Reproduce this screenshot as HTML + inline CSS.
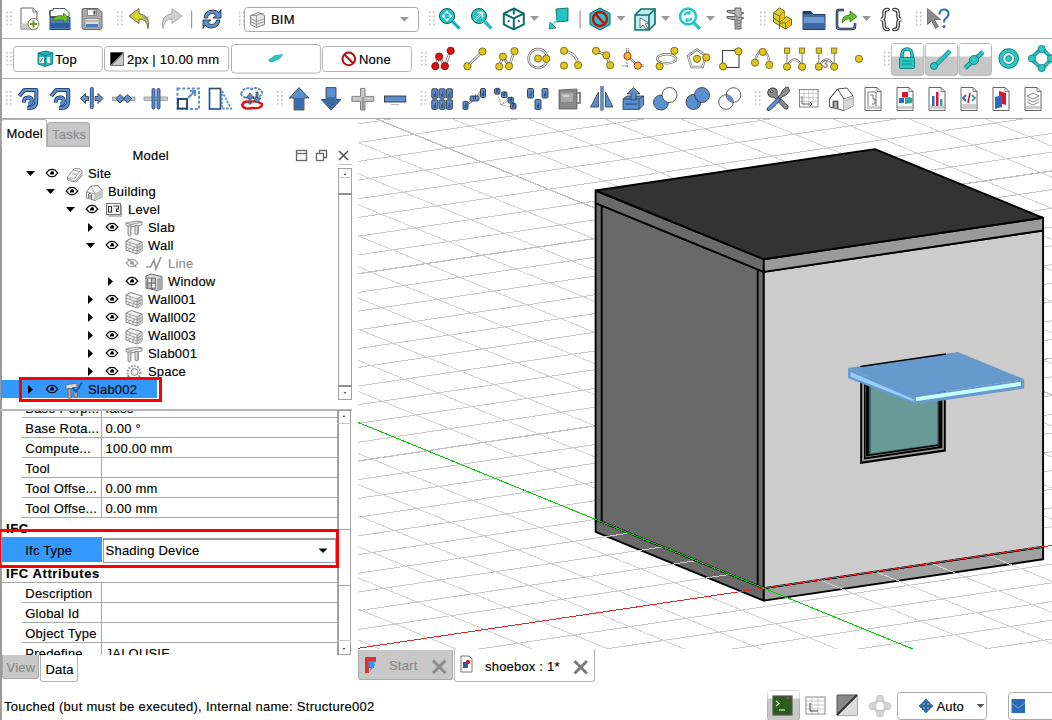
<!DOCTYPE html><html><head><meta charset="utf-8"><style>
*{margin:0;padding:0;box-sizing:border-box}
html,body{width:1052px;height:720px;overflow:hidden;background:#fff}
body{position:relative;font-family:"Liberation Sans",sans-serif;font-size:13.3px;color:#000}
.a{position:absolute}
.t{position:absolute;white-space:nowrap;line-height:16px;-webkit-text-stroke:0.15px currentColor}
.hl{position:absolute;height:1px;background:#b4b4b4}
.vl{position:absolute;width:1px;background:#b4b4b4}
.grip{position:absolute;width:6px;height:16px;background-image:radial-gradient(circle,#c8c8c8 0.8px,transparent 1px);background-size:3px 3px}
.btn{position:absolute;border:1px solid #b8b8b8;border-radius:4px;background:#fff}
</style></head><body>
<div class="hl" style="left:0;top:38px;width:1052px;background:#a8a8a8"></div>
<div class="hl" style="left:0;top:78px;width:1052px;background:#a8a8a8"></div>
<div class="hl" style="left:0;top:118px;width:1052px;background:#a8a8a8"></div>
<div class="vl" style="left:0;top:0;height:720px;width:1.5px;background:#9a9a9a"></div>
<svg class="a" style="left:0;top:0" width="1052" height="118" viewBox="0 0 1052 118"><path d="M6.2,12.2 h2 M6.7,11.7 v2" stroke="#c4c4c4" stroke-width="0.9" fill="none"/><path d="M10.2,12.2 h2 M10.7,11.7 v2" stroke="#c4c4c4" stroke-width="0.9" fill="none"/><path d="M6.2,16.2 h2 M6.7,15.7 v2" stroke="#c4c4c4" stroke-width="0.9" fill="none"/><path d="M10.2,16.2 h2 M10.7,15.7 v2" stroke="#c4c4c4" stroke-width="0.9" fill="none"/><path d="M6.2,20.2 h2 M6.7,19.7 v2" stroke="#c4c4c4" stroke-width="0.9" fill="none"/><path d="M10.2,20.2 h2 M10.7,19.7 v2" stroke="#c4c4c4" stroke-width="0.9" fill="none"/><path d="M6.2,24.2 h2 M6.7,23.7 v2" stroke="#c4c4c4" stroke-width="0.9" fill="none"/><path d="M10.2,24.2 h2 M10.7,23.7 v2" stroke="#c4c4c4" stroke-width="0.9" fill="none"/><g transform="translate(19.5,7.5) scale(1.0)"><path d="M1.5,0.5 h12 l4,4 v17 h-16z" fill="#fff" stroke="#666" stroke-width="1"/><path d="M13.5,0.5 v4 h4" fill="#ddd" stroke="#666" stroke-width="0.8"/><rect x="2" y="16" width="8" height="5" fill="#ccc"/><circle cx="14" cy="16.5" r="5.5" fill="#fff" stroke="#777" stroke-width="1"/><path d="M14,13 v7 M10.5,16.5 h7" stroke="#6a9a1a" stroke-width="2"/></g><g transform="translate(49.5,8.0) scale(1.0)"><path d="M0.5,2.5 h3 v-2 h12 l4,4 v4 h-19z" fill="#fff" stroke="#555" stroke-width="1"/><path d="M0.5,2 v19.5 h20 v-12 h-20" fill="#4a80c0" stroke="#2a4a80" stroke-width="1"/><rect x="1.5" y="15" width="18" height="5" fill="#2d5f9e"/><path d="M3,13 Q6,6 14,8 L14,5 L19,10 L14,15 L14,12 Q8,11 3,13z" fill="#6ac02a" stroke="#3a7a10" stroke-width="0.8"/></g><g transform="translate(81.5,8.0) scale(1.0)"><path d="M0.5,2.5 q0,-2 2,-2 h14 l4,4 v15 q0,2 -2,2 h-16 q-2,0 -2,-2z" fill="#a8a8a8" stroke="#666" stroke-width="1"/><rect x="6" y="1.5" width="9" height="6" fill="#fff" stroke="#777" stroke-width="0.8"/><rect x="12" y="2.5" width="2" height="4" fill="#444"/><rect x="3.5" y="10.5" width="14" height="9" fill="#ddd" stroke="#888" stroke-width="0.8"/><rect x="4.5" y="16" width="12" height="3" fill="#4a80c0"/><path d="M4.5,13 h12" stroke="#999" stroke-width="1"/></g><path d="M117.0,12.2 h2 M117.5,11.7 v2" stroke="#c4c4c4" stroke-width="0.9" fill="none"/><path d="M121.0,12.2 h2 M121.5,11.7 v2" stroke="#c4c4c4" stroke-width="0.9" fill="none"/><path d="M117.0,16.2 h2 M117.5,15.7 v2" stroke="#c4c4c4" stroke-width="0.9" fill="none"/><path d="M121.0,16.2 h2 M121.5,15.7 v2" stroke="#c4c4c4" stroke-width="0.9" fill="none"/><path d="M117.0,20.2 h2 M117.5,19.7 v2" stroke="#c4c4c4" stroke-width="0.9" fill="none"/><path d="M121.0,20.2 h2 M121.5,19.7 v2" stroke="#c4c4c4" stroke-width="0.9" fill="none"/><path d="M117.0,24.2 h2 M117.5,23.7 v2" stroke="#c4c4c4" stroke-width="0.9" fill="none"/><path d="M121.0,24.2 h2 M121.5,23.7 v2" stroke="#c4c4c4" stroke-width="0.9" fill="none"/><g transform="translate(128.0,7.5) scale(1.0)"><path d="M11,1 L1,8.5 L11,16 L11,11.5 Q19,11 20,21 Q23,8 11,6z" fill="#d4d42a" stroke="#666" stroke-width="1"/><path d="M14,9 l7,0 -3,4z" fill="#999"/></g><g transform="translate(160.0,7.5) scale(1.0)"><path d="M12,1 L22,8.5 L12,16 L12,11.5 Q4,11 3,21 Q0,8 12,6z" fill="#cfcfcf" stroke="#aaa" stroke-width="1"/></g><rect x="191" y="10.5" width="1.2" height="18" fill="#999"/><g transform="translate(201.0,8.0) scale(1.0)"><path d="M3,10 Q4,2 12,2 Q16,2 18,5 L20,1.5 L20,10 L12,10 L15,7.5 Q14,5.5 11.5,5.5 Q7,5.5 6.5,10z" fill="#5a90d0" stroke="#234" stroke-width="0.9"/><path d="M19,12 Q18,20 10,20 Q6,20 4,17 L2,20.5 L2,12 L10,12 L7,14.5 Q8,16.5 10.5,16.5 Q15,16.5 15.5,12z" fill="#5a90d0" stroke="#234" stroke-width="0.9"/></g><path d="M239.0,12.2 h2 M239.5,11.7 v2" stroke="#c4c4c4" stroke-width="0.9" fill="none"/><path d="M243.0,12.2 h2 M243.5,11.7 v2" stroke="#c4c4c4" stroke-width="0.9" fill="none"/><path d="M239.0,16.2 h2 M239.5,15.7 v2" stroke="#c4c4c4" stroke-width="0.9" fill="none"/><path d="M243.0,16.2 h2 M243.5,15.7 v2" stroke="#c4c4c4" stroke-width="0.9" fill="none"/><path d="M239.0,20.2 h2 M239.5,19.7 v2" stroke="#c4c4c4" stroke-width="0.9" fill="none"/><path d="M243.0,20.2 h2 M243.5,19.7 v2" stroke="#c4c4c4" stroke-width="0.9" fill="none"/><path d="M239.0,24.2 h2 M239.5,23.7 v2" stroke="#c4c4c4" stroke-width="0.9" fill="none"/><path d="M243.0,24.2 h2 M243.5,23.7 v2" stroke="#c4c4c4" stroke-width="0.9" fill="none"/><rect x="244.5" y="7.5" width="174" height="24" rx="3" fill="#fff" stroke="#aaa"/><g transform="translate(249.5,11.5) scale(1.0)"><path d="M1,4 L9,1 L15,4 L15,13 L7,16 L1,13z" fill="#e8e8e8" stroke="#777" stroke-width="0.9"/><path d="M1,7 L7,10 L15,7 M1,10 L7,13 L15,10 M7,4 L7,16 M7,4 L15,1.5 M1,4 L7,4" fill="none" stroke="#888" stroke-width="0.8"/></g><polygon points="400,17 409,17 404.5,21.5" fill="#999"/><path d="M429.0,12.2 h2 M429.5,11.7 v2" stroke="#c4c4c4" stroke-width="0.9" fill="none"/><path d="M433.0,12.2 h2 M433.5,11.7 v2" stroke="#c4c4c4" stroke-width="0.9" fill="none"/><path d="M429.0,16.2 h2 M429.5,15.7 v2" stroke="#c4c4c4" stroke-width="0.9" fill="none"/><path d="M433.0,16.2 h2 M433.5,15.7 v2" stroke="#c4c4c4" stroke-width="0.9" fill="none"/><path d="M429.0,20.2 h2 M429.5,19.7 v2" stroke="#c4c4c4" stroke-width="0.9" fill="none"/><path d="M433.0,20.2 h2 M433.5,19.7 v2" stroke="#c4c4c4" stroke-width="0.9" fill="none"/><path d="M429.0,24.2 h2 M429.5,23.7 v2" stroke="#c4c4c4" stroke-width="0.9" fill="none"/><path d="M433.0,24.2 h2 M433.5,23.7 v2" stroke="#c4c4c4" stroke-width="0.9" fill="none"/><g transform="translate(438.5,7.5) scale(1.0)"><circle cx="8.5" cy="8.5" r="7.5" fill="#24c4c4" stroke="#0a5a5a" stroke-width="1"/><path d="M13.5,13.5 L21,21" stroke="#24c4c4" stroke-width="3.5"/><path d="M13.5,13.5 L21,21" stroke="#0a5a5a" stroke-width="0.6"/><path d="M8.5,3 l2.5,3 h-5z M8.5,14 l2.5,-3 h-5z M3,8.5 l3,2.5 v-5z M14,8.5 l-3,2.5 v-5z" fill="#fff"/><circle cx="8.5" cy="8.5" r="2" fill="#24c4c4"/></g><g transform="translate(470.5,7.5) scale(1.0)"><circle cx="8.5" cy="8.5" r="7.5" fill="#24c4c4" stroke="#0a5a5a" stroke-width="1"/><path d="M13.5,13.5 L21,21" stroke="#24c4c4" stroke-width="3.5"/><path d="M4,13 L11,6 M7,5 h5 v5" stroke="#fff" stroke-width="1.6" fill="none"/><path d="M4,13 L11,6" stroke="#0a5a5a" stroke-width="0.5"/></g><g transform="translate(502.8,7.5) scale(1.0)"><path d="M11,1 L21,6 L21,17 L11,22 L1,17 L1,6z" fill="#fff" stroke="#0e6e6e" stroke-width="2"/><path d="M1,6 L11,11 L21,6 M11,11 V22" stroke="#0e6e6e" stroke-width="2" fill="none"/><path d="M11,2 v5" stroke="#0e6e6e" stroke-width="2"/><path d="M5,14 l2,-1 M15,13 l2,1" stroke="#0e6e6e" stroke-width="1.5"/></g><polygon points="530.0,16.0 539.0,16.0 534.5,21.0" fill="#999"/><g transform="translate(548.0,8.0) scale(1.0)"><path d="M8,1 L20,0 L20,13 L9,14z" fill="#24c4c4" stroke="#0a5a5a" stroke-width="0.8"/><path d="M14,7 L3,18" stroke="#24c4c4" stroke-width="1.5" stroke-dasharray="2,1"/><path d="M1,21 L2,14 L8,20z" fill="#24c4c4" stroke="#0a5a5a" stroke-width="0.6"/></g><rect x="579.5" y="10.5" width="1.2" height="18" fill="#999"/><g transform="translate(589.0,7.5) scale(1.0)"><path d="M11,0.5 L21,6 L21,17 L11,22.5 L1,17 L1,6z" fill="#24c4c4" stroke="#0a5a5a" stroke-width="1"/><circle cx="11" cy="11.5" r="7" fill="none" stroke="#c01010" stroke-width="2.4"/><path d="M6.5,6.5 L15.5,16.5" stroke="#c01010" stroke-width="2.4"/></g><polygon points="616.5,16.0 625.5,16.0 621.0,21.0" fill="#999"/><g transform="translate(634.0,8.0) scale(1.0)"><path d="M7,1 L21,1 L21,16 L15,22 L1,22 L1,7z" fill="#bfeeee" stroke="#0e6e6e" stroke-width="1.6"/><path d="M1,7 L15,7 L21,1 M15,7 V22" stroke="#0e6e6e" stroke-width="1.6" fill="none"/><path d="M6,10 L6,20 L9,17 L12,21 L14,20 L11,16 L15,15z" fill="#fff" stroke="#555" stroke-width="0.8"/></g><polygon points="661.0,16.0 670.0,16.0 665.5,21.0" fill="#999"/><g transform="translate(678.5,7.5) scale(1.0)"><circle cx="9.5" cy="9" r="8" fill="#e8f8f8" stroke="#24c4c4" stroke-width="2.4"/><path d="M15,15 L21.5,21.5" stroke="#24c4c4" stroke-width="3.5"/><path d="M5,8 Q6,4 10,4 L12,3 L12,7 L8,7 L10,6 Q7,6 7,8z M14,10 Q13,14 9,14 L7,15 L7,11 L11,11 L9,12 Q12,12 12,10z" fill="#24c4c4"/></g><polygon points="706.0,16.0 715.0,16.0 710.5,21.0" fill="#999"/><g transform="translate(726.0,7.5) scale(1.0)"><path d="M9,0.5 L15,0.5 L15,5 L18,5.5 L15,7 L15,10 L18,10.5 L15,12 L15,21.5 L9,21.5 L9,12 L6,12 L1,10.5 L1,9 L9,9 L9,6 L6,6 L1,4.5 L1,3 L9,3z" fill="#b4b4b4" stroke="#555" stroke-width="0.9"/><path d="M11,8 v12 M12,10 h2 M12,13 h2 M12,16 h2 M12,19 h2" stroke="#666" stroke-width="0.8"/></g><path d="M760.0,12.2 h2 M760.5,11.7 v2" stroke="#c4c4c4" stroke-width="0.9" fill="none"/><path d="M764.0,12.2 h2 M764.5,11.7 v2" stroke="#c4c4c4" stroke-width="0.9" fill="none"/><path d="M760.0,16.2 h2 M760.5,15.7 v2" stroke="#c4c4c4" stroke-width="0.9" fill="none"/><path d="M764.0,16.2 h2 M764.5,15.7 v2" stroke="#c4c4c4" stroke-width="0.9" fill="none"/><path d="M760.0,20.2 h2 M760.5,19.7 v2" stroke="#c4c4c4" stroke-width="0.9" fill="none"/><path d="M764.0,20.2 h2 M764.5,19.7 v2" stroke="#c4c4c4" stroke-width="0.9" fill="none"/><path d="M760.0,24.2 h2 M760.5,23.7 v2" stroke="#c4c4c4" stroke-width="0.9" fill="none"/><path d="M764.0,24.2 h2 M764.5,23.7 v2" stroke="#c4c4c4" stroke-width="0.9" fill="none"/><g transform="translate(772.5,7.0) scale(1.0)"><path d="M1,6 L7,1 L12,4 L12,11 L14,9.5 L19,12.5 L19,18 L13,22 L1,15z" fill="#d8d030" stroke="#5e5a10" stroke-width="0.9"/><path d="M7,9 L12,4 M1,6 L7,9 L7,22 M7,15 L13,11 M13,16 L19,12.5 M13,16 L13,22 M1,11 L7,15 M7,16 L13,16" fill="none" stroke="#5e5a10" stroke-width="0.8"/><path d="M7.5,9 L12,4.5 L12,11 L7.5,14z" fill="#f0c010"/><path d="M13.5,16 L18.5,13 L18.5,18 L13.5,21z" fill="#f0c010"/></g><g transform="translate(802.5,8.0) scale(1.0)"><path d="M0.5,3.5 h8 l2,3 h12 v15 h-22z" fill="#6a9ad0" stroke="#1e3e6e" stroke-width="1"/><path d="M0.5,3.5 h8 l2,3 h-10z" fill="#1e3e6e"/><rect x="1" y="15" width="21" height="6" fill="#3a6aa0"/><path d="M0.5,8 h22" stroke="#1e3e6e" stroke-width="1"/></g><g transform="translate(836.0,8.0) scale(1.0)"><path d="M8,2 L3,2 Q1,2 1,4 L1,18 Q1,21 4,21 L16,21 Q19,21 19,18 L19,15" fill="none" stroke="#2a2a2a" stroke-width="2.6"/><path d="M8,2 L3,2 Q1,2 1,4 L1,18 Q1,21 4,21 L16,21 Q19,21 19,18 L19,15" fill="none" stroke="#4a80c0" stroke-width="1.2"/><path d="M6,15 Q6,7 14,7 L14,3 L21,8.5 L14,14 L14,10.5 Q9,10.5 6,15z" fill="#6ac02a" stroke="#2a6a10" stroke-width="0.8"/></g><polygon points="862.0,16.0 871.0,16.0 866.5,21.0" fill="#999"/><g transform="translate(880.0,8.0) scale(1.0)"><path d="M8,1.5 Q4,1.5 4,5 L4,8.5 Q4,11 1,11.5 Q4,12 4,14.5 L4,18 Q4,21.5 8,21.5 M14,1.5 Q18,1.5 18,5 L18,8.5 Q18,11 21,11.5 Q18,12 18,14.5 L18,18 Q18,21.5 14,21.5" fill="none" stroke="#2a2a2a" stroke-width="3.6" stroke-linecap="round"/><path d="M8,1.5 Q4,1.5 4,5 L4,8.5 Q4,11 1,11.5 Q4,12 4,14.5 L4,18 Q4,21.5 8,21.5 M14,1.5 Q18,1.5 18,5 L18,8.5 Q18,11 21,11.5 Q18,12 18,14.5 L18,18 Q18,21.5 14,21.5" fill="none" stroke="#fff" stroke-width="1.3" stroke-linecap="round"/></g><path d="M916.0,12.2 h2 M916.5,11.7 v2" stroke="#c4c4c4" stroke-width="0.9" fill="none"/><path d="M920.0,12.2 h2 M920.5,11.7 v2" stroke="#c4c4c4" stroke-width="0.9" fill="none"/><path d="M916.0,16.2 h2 M916.5,15.7 v2" stroke="#c4c4c4" stroke-width="0.9" fill="none"/><path d="M920.0,16.2 h2 M920.5,15.7 v2" stroke="#c4c4c4" stroke-width="0.9" fill="none"/><path d="M916.0,20.2 h2 M916.5,19.7 v2" stroke="#c4c4c4" stroke-width="0.9" fill="none"/><path d="M920.0,20.2 h2 M920.5,19.7 v2" stroke="#c4c4c4" stroke-width="0.9" fill="none"/><path d="M916.0,24.2 h2 M916.5,23.7 v2" stroke="#c4c4c4" stroke-width="0.9" fill="none"/><path d="M920.0,24.2 h2 M920.5,23.7 v2" stroke="#c4c4c4" stroke-width="0.9" fill="none"/><g transform="translate(926.5,7.5) scale(1.0)"><path d="M1,1 L1,17 L5,13 L9,21 L12,19 L8,12 L14,12z" fill="#8a8a8a" stroke="#555" stroke-width="0.7"/><path d="M13,7 Q13,2 17.5,2 Q22,2 22,6.5 Q22,9 19,11 Q17.5,12 17.5,15" fill="none" stroke="#2a6ab8" stroke-width="2"/><circle cx="17.5" cy="19" r="1.5" fill="#2a6ab8"/></g><path d="M6.3,52.4 h2 M6.8,51.9 v2" stroke="#c4c4c4" stroke-width="0.9" fill="none"/><path d="M10.3,52.4 h2 M10.8,51.9 v2" stroke="#c4c4c4" stroke-width="0.9" fill="none"/><path d="M6.3,56.4 h2 M6.8,55.9 v2" stroke="#c4c4c4" stroke-width="0.9" fill="none"/><path d="M10.3,56.4 h2 M10.8,55.9 v2" stroke="#c4c4c4" stroke-width="0.9" fill="none"/><path d="M6.3,60.4 h2 M6.8,59.9 v2" stroke="#c4c4c4" stroke-width="0.9" fill="none"/><path d="M10.3,60.4 h2 M10.8,59.9 v2" stroke="#c4c4c4" stroke-width="0.9" fill="none"/><path d="M6.3,64.4 h2 M6.8,63.9 v2" stroke="#c4c4c4" stroke-width="0.9" fill="none"/><path d="M10.3,64.4 h2 M10.8,63.9 v2" stroke="#c4c4c4" stroke-width="0.9" fill="none"/><rect x="13.5" y="46.5" width="88.8" height="25" rx="3" fill="#fff" stroke="#b0b0b0"/><rect x="104.5" y="46.5" width="124.2" height="24.5" rx="3" fill="#fff" stroke="#b0b0b0"/><rect x="231.5" y="44.5" width="88.9" height="28.6" rx="3" fill="#fff" stroke="#b0b0b0"/><rect x="322.5" y="46.5" width="88.9" height="25" rx="3" fill="#fff" stroke="#b0b0b0"/><path d="M38,53 L46,51 L53,53 L52.5,64 L45,66.5 L38,64z" fill="#20b8b8" stroke="#0a6a6a" stroke-width="0.8"/><path d="M38,53 L45,55.5 L53,53 M45,55.5 V66.5" stroke="#0a6a6a" stroke-width="0.8" fill="none"/><rect x="39.5" y="57" width="4.5" height="6" fill="#fff"/><path d="M40,62 l3,-4" stroke="#333" stroke-width="0.8"/><rect x="47" y="57" width="3" height="6" fill="#fff"/><path d="M110.5,52.5 h13 v13 h-13z" fill="#fff" stroke="#888" stroke-width="0.8"/><path d="M110.5,52.5 h13 l-13,13z" fill="#000"/><path d="M123.5,53.5 v12 h-12z" fill="#c8c8c8" stroke="#666" stroke-width="0.8"/><path d="M268,60 L275,55 L283.5,54 L280,59 L272,62.5z" fill="#30c0c0"/><path d="M268,60 L272,62.5 L270,62z" fill="#0a7a7a"/><circle cx="348.8" cy="58.9" r="6.3" fill="none" stroke="#b01010" stroke-width="2"/><path d="M344.5,54.5 L353,63.3" stroke="#b01010" stroke-width="2"/><path d="M421.0,52.4 h2 M421.5,51.9 v2" stroke="#c4c4c4" stroke-width="0.9" fill="none"/><path d="M425.0,52.4 h2 M425.5,51.9 v2" stroke="#c4c4c4" stroke-width="0.9" fill="none"/><path d="M421.0,56.4 h2 M421.5,55.9 v2" stroke="#c4c4c4" stroke-width="0.9" fill="none"/><path d="M425.0,56.4 h2 M425.5,55.9 v2" stroke="#c4c4c4" stroke-width="0.9" fill="none"/><path d="M421.0,60.4 h2 M421.5,59.9 v2" stroke="#c4c4c4" stroke-width="0.9" fill="none"/><path d="M425.0,60.4 h2 M425.5,59.9 v2" stroke="#c4c4c4" stroke-width="0.9" fill="none"/><path d="M421.0,64.4 h2 M421.5,63.9 v2" stroke="#c4c4c4" stroke-width="0.9" fill="none"/><path d="M425.0,64.4 h2 M425.5,63.9 v2" stroke="#c4c4c4" stroke-width="0.9" fill="none"/><path d="M435.3,66.2 L439.1,56.6 L444.9,66.2 L450.7,50.8" fill="none" stroke="#666" stroke-width="2.6"/><path d="M435.3,66.2 L439.1,56.6 L444.9,66.2 L450.7,50.8" fill="none" stroke="#fff" stroke-width="1.2"/><circle cx="435.3" cy="66.2" r="3.6" fill="#e01010" stroke="#801010" stroke-width="0.9"/><circle cx="439.1" cy="56.6" r="3.6" fill="#e01010" stroke="#801010" stroke-width="0.9"/><circle cx="444.9" cy="66.2" r="3.6" fill="#e01010" stroke="#801010" stroke-width="0.9"/><circle cx="450.7" cy="50.8" r="3.6" fill="#e01010" stroke="#801010" stroke-width="0.9"/><path d="M467.4,66.2 L482.5,51.5" fill="none" stroke="#666" stroke-width="2.6"/><path d="M467.4,66.2 L482.5,51.5" fill="none" stroke="#fff" stroke-width="1.2"/><circle cx="467.4" cy="66.2" r="3.6" fill="#e6c41e" stroke="#6e6a1a" stroke-width="0.9"/><circle cx="482.5" cy="51.5" r="3.6" fill="#e6c41e" stroke="#6e6a1a" stroke-width="0.9"/><path d="M499.2,66.5 L503.0,56.6 L509.0,66.2 L514.5,51.1" fill="none" stroke="#666" stroke-width="2.6"/><path d="M499.2,66.5 L503.0,56.6 L509.0,66.2 L514.5,51.1" fill="none" stroke="#fff" stroke-width="1.2"/><circle cx="499.2" cy="66.5" r="3.6" fill="#e6c41e" stroke="#6e6a1a" stroke-width="0.9"/><circle cx="503.0" cy="56.6" r="3.6" fill="#e6c41e" stroke="#6e6a1a" stroke-width="0.9"/><circle cx="509.0" cy="66.2" r="3.6" fill="#e6c41e" stroke="#6e6a1a" stroke-width="0.9"/><circle cx="514.5" cy="51.1" r="3.6" fill="#e6c41e" stroke="#6e6a1a" stroke-width="0.9"/><circle cx="538" cy="58.5" r="9.5" fill="none" stroke="#777" stroke-width="2.4"/><circle cx="538" cy="58.5" r="9.5" fill="none" stroke="#fff" stroke-width="1"/><circle cx="538.0" cy="58.5" r="3.6" fill="#e6c41e" stroke="#6e6a1a" stroke-width="0.9"/><circle cx="546.3" cy="58.8" r="3.6" fill="#e6c41e" stroke="#6e6a1a" stroke-width="0.9"/><path d="M564,50.8 Q577,53 578.1,65.2" fill="none" stroke="#777" stroke-width="2.6"/><path d="M564,50.8 Q577,53 578.1,65.2" fill="none" stroke="#fff" stroke-width="1.2"/><circle cx="564.0" cy="50.8" r="3.6" fill="#e6c41e" stroke="#6e6a1a" stroke-width="0.9"/><circle cx="564.0" cy="65.6" r="3.6" fill="#e6c41e" stroke="#6e6a1a" stroke-width="0.9"/><circle cx="578.1" cy="65.2" r="3.6" fill="#e6c41e" stroke="#6e6a1a" stroke-width="0.9"/><path d="M596.0,50.8 L606.3,55.3 L610.2,65.2" fill="none" stroke="#666" stroke-width="2.6"/><path d="M596.0,50.8 L606.3,55.3 L610.2,65.2" fill="none" stroke="#fff" stroke-width="1.2"/><circle cx="596.0" cy="50.8" r="3.6" fill="#e6c41e" stroke="#6e6a1a" stroke-width="0.9"/><circle cx="606.3" cy="55.3" r="3.6" fill="#e6c41e" stroke="#6e6a1a" stroke-width="0.9"/><circle cx="610.2" cy="65.2" r="3.6" fill="#e6c41e" stroke="#6e6a1a" stroke-width="0.9"/><path d="M627.5,48 v6 M637.8,65.6 h6 M627.5,56 L637.8,65.6" stroke="#666" stroke-width="2.2"/><path d="M627.5,48 v6 M637.8,65.6 h6 M627.5,56 L637.8,65.6" stroke="#fff" stroke-width="0.9"/><path d="M627,60 v8 M622,66 h6" stroke="#555" stroke-width="0.9" stroke-dasharray="1.5,1"/><circle cx="627.5" cy="56.0" r="3.6" fill="#e6c41e" stroke="#a02020" stroke-width="0.9"/><circle cx="637.8" cy="65.6" r="3.6" fill="#e6c41e" stroke="#a02020" stroke-width="0.9"/><ellipse cx="666.7" cy="58.8" rx="9.5" ry="4.5" fill="none" stroke="#777" stroke-width="2.4"/><ellipse cx="666.7" cy="58.8" rx="9.5" ry="4.5" fill="none" stroke="#fff" stroke-width="1"/><circle cx="674.4" cy="50.8" r="3.6" fill="#e6c41e" stroke="#6e6a1a" stroke-width="0.9"/><circle cx="659.6" cy="66.2" r="3.6" fill="#e6c41e" stroke="#6e6a1a" stroke-width="0.9"/><path d="M697,49.5 L706,56 L702.5,67 L691.5,67 L688,56z" fill="none" stroke="#777" stroke-width="2.4"/><path d="M697,49.5 L706,56 L702.5,67 L691.5,67 L688,56z" fill="none" stroke="#fff" stroke-width="1"/><circle cx="697.0" cy="58.8" r="3.6" fill="#e6c41e" stroke="#6e6a1a" stroke-width="0.9"/><circle cx="706.3" cy="57.5" r="3.6" fill="#e6c41e" stroke="#6e6a1a" stroke-width="0.9"/><rect x="722.5" y="50.5" width="16.5" height="17" fill="none" stroke="#444" stroke-width="1.1"/><circle cx="738.4" cy="51.3" r="3.6" fill="#e6c41e" stroke="#6e6a1a" stroke-width="0.9"/><circle cx="723.0" cy="66.4" r="3.6" fill="#e6c41e" stroke="#6e6a1a" stroke-width="0.9"/><path d="M755,62.7 Q757,50 762.8,51.9 Q769,52 769.3,64.9" fill="none" stroke="#777" stroke-width="2.4"/><path d="M755,62.7 Q757,50 762.8,51.9 Q769,52 769.3,64.9" fill="none" stroke="#fff" stroke-width="1"/><circle cx="762.8" cy="51.9" r="3.6" fill="#e6c41e" stroke="#6e6a1a" stroke-width="0.9"/><circle cx="755.0" cy="62.7" r="3.6" fill="#e6c41e" stroke="#6e6a1a" stroke-width="0.9"/><circle cx="769.3" cy="64.9" r="3.6" fill="#e6c41e" stroke="#6e6a1a" stroke-width="0.9"/><path d="M787.0,50.6 V66.7 M802.1,50.6 V66.7" stroke="#777" stroke-width="1"/><path d="M787.0,66.7 Q794.5,52 802.1,66.7" fill="none" stroke="#777" stroke-width="2.4"/><path d="M787.0,66.7 Q794.5,52 802.1,66.7" fill="none" stroke="#fff" stroke-width="1"/><rect x="784.4" y="48.0" width="5.2" height="5.2" fill="#e6c41e" stroke="#6e6a1a" stroke-width="0.8"/><rect x="799.5" y="48.0" width="5.2" height="5.2" fill="#e6c41e" stroke="#6e6a1a" stroke-width="0.8"/><circle cx="787.0" cy="66.7" r="3.6" fill="#e6c41e" stroke="#6e6a1a" stroke-width="0.9"/><circle cx="802.1" cy="66.7" r="3.6" fill="#e6c41e" stroke="#6e6a1a" stroke-width="0.9"/><path d="M818.8,50.6 V66.7 M834.2,50.6 V66.7" stroke="#777" stroke-width="1"/><path d="M818.8,66.7 Q826.5,52 834.2,66.7" fill="none" stroke="#777" stroke-width="2.4"/><path d="M818.8,66.7 Q826.5,52 834.2,66.7" fill="none" stroke="#fff" stroke-width="1"/><rect x="816.2" y="48.0" width="5.2" height="5.2" fill="#e6c41e" stroke="#6e6a1a" stroke-width="0.8"/><rect x="831.6" y="48.0" width="5.2" height="5.2" fill="#e6c41e" stroke="#6e6a1a" stroke-width="0.8"/><circle cx="818.8" cy="66.7" r="3.6" fill="#e6c41e" stroke="#6e6a1a" stroke-width="0.9"/><circle cx="834.2" cy="66.7" r="3.6" fill="#e6c41e" stroke="#6e6a1a" stroke-width="0.9"/><text x="822.5" y="68" font-family="Liberation Sans" font-size="10" font-weight="bold" fill="#888">3</text><circle cx="858.9" cy="58.8" r="3.6" fill="#e6c41e" stroke="#6e6a1a" stroke-width="0.9"/><path d="M884.0,52.2 h2 M884.5,51.7 v2" stroke="#c4c4c4" stroke-width="0.9" fill="none"/><path d="M888.0,52.2 h2 M888.5,51.7 v2" stroke="#c4c4c4" stroke-width="0.9" fill="none"/><path d="M884.0,56.2 h2 M884.5,55.7 v2" stroke="#c4c4c4" stroke-width="0.9" fill="none"/><path d="M888.0,56.2 h2 M888.5,55.7 v2" stroke="#c4c4c4" stroke-width="0.9" fill="none"/><path d="M884.0,60.2 h2 M884.5,59.7 v2" stroke="#c4c4c4" stroke-width="0.9" fill="none"/><path d="M888.0,60.2 h2 M888.5,59.7 v2" stroke="#c4c4c4" stroke-width="0.9" fill="none"/><path d="M884.0,64.2 h2 M884.5,63.7 v2" stroke="#c4c4c4" stroke-width="0.9" fill="none"/><path d="M888.0,64.2 h2 M888.5,63.7 v2" stroke="#c4c4c4" stroke-width="0.9" fill="none"/><rect x="891.3" y="43.5" width="32.4" height="31.8" rx="3" fill="#c8c8c8" stroke="#b0b0b0"/><rect x="891.8" y="44" width="31.4" height="12.5" fill="#fff"/><rect x="925.3" y="43.5" width="32.4" height="31.8" rx="3" fill="#c8c8c8" stroke="#b0b0b0"/><rect x="925.8" y="44" width="31.4" height="12.5" fill="#fff"/><rect x="959.0" y="43.5" width="32.4" height="31.8" rx="3" fill="#c8c8c8" stroke="#b0b0b0"/><rect x="959.5" y="44" width="31.4" height="12.5" fill="#fff"/><path d="M902,58 v-4 a5,5 0 0 1 10,0 v4" fill="none" stroke="#0a7a7a" stroke-width="3.5"/><path d="M902,58 v-4 a5,5 0 0 1 10,0 v4" fill="none" stroke="#2cc8c8" stroke-width="1.8"/><rect x="899.5" y="57.5" width="15" height="11" rx="1" fill="#2cc8c8" stroke="#0a7a7a" stroke-width="0.9"/><path d="M902,61 h10 M902,64 h10" stroke="#0a7a7a" stroke-width="0.8"/><path d="M935,66 L950,51" stroke="#0a7a7a" stroke-width="4.5"/><path d="M935,66 L950,51" stroke="#2cc8c8" stroke-width="3"/><circle cx="934" cy="66" r="3.5" fill="#2cc8c8" stroke="#0a7a7a" stroke-width="0.9"/><path d="M965,68 L983,52" stroke="#0a7a7a" stroke-width="4.5"/><path d="M965,68 L983,52" stroke="#2cc8c8" stroke-width="3"/><circle cx="974" cy="60" r="4.5" fill="#2cc8c8" stroke="#0a7a7a" stroke-width="0.9"/><circle cx="1008.7" cy="58.5" r="9.8" fill="#2cc8c8" stroke="#0a7a7a" stroke-width="1"/><circle cx="1008.7" cy="58.5" r="5.8" fill="#fff" stroke="#0a7a7a" stroke-width="0.8"/><circle cx="1008.7" cy="58.5" r="3" fill="#2cc8c8" stroke="#0a7a7a" stroke-width="0.8"/><path d="M1041.7,48 L1052,58.5 L1041.7,69 L1031,58.5z" fill="none" stroke="#0a7a7a" stroke-width="3.6"/><path d="M1041.7,48 L1052,58.5 L1041.7,69 L1031,58.5z" fill="none" stroke="#2cc8c8" stroke-width="2"/><circle cx="1041.7" cy="49.0" r="3.6" fill="#2cc8c8" stroke="#0a7a7a" stroke-width="0.8"/><circle cx="1051.0" cy="58.5" r="3.6" fill="#2cc8c8" stroke="#0a7a7a" stroke-width="0.8"/><circle cx="1041.7" cy="68.0" r="3.6" fill="#2cc8c8" stroke="#0a7a7a" stroke-width="0.8"/><circle cx="1032.0" cy="58.5" r="3.6" fill="#2cc8c8" stroke="#0a7a7a" stroke-width="0.8"/><path d="M6.0,91.8 h2 M6.5,91.3 v2" stroke="#c4c4c4" stroke-width="0.9" fill="none"/><path d="M10.0,91.8 h2 M10.5,91.3 v2" stroke="#c4c4c4" stroke-width="0.9" fill="none"/><path d="M6.0,95.8 h2 M6.5,95.3 v2" stroke="#c4c4c4" stroke-width="0.9" fill="none"/><path d="M10.0,95.8 h2 M10.5,95.3 v2" stroke="#c4c4c4" stroke-width="0.9" fill="none"/><path d="M6.0,99.8 h2 M6.5,99.3 v2" stroke="#c4c4c4" stroke-width="0.9" fill="none"/><path d="M10.0,99.8 h2 M10.5,99.3 v2" stroke="#c4c4c4" stroke-width="0.9" fill="none"/><path d="M6.0,103.8 h2 M6.5,103.3 v2" stroke="#c4c4c4" stroke-width="0.9" fill="none"/><path d="M10.0,103.8 h2 M10.5,103.3 v2" stroke="#c4c4c4" stroke-width="0.9" fill="none"/><g transform="translate(17.3,88.0) scale(1.0)"><path d="M2,8 L7,2 L19,2 L19,13 Q19,20 12,20 L10,20 M6.5,14.5 Q6.5,9.5 11,9.5 Q14.5,9.5 14.5,13 Q14.5,16 11,16" fill="none" stroke="#1a3060" stroke-width="4" stroke-linejoin="round"/><path d="M2,8 L7,2 L19,2 L19,13 Q19,20 12,20 L10,20 M6.5,14.5 Q6.5,9.5 11,9.5 Q14.5,9.5 14.5,13 Q14.5,16 11,16" fill="none" stroke="#5a90d0" stroke-width="2.4" stroke-linejoin="round"/></g><g transform="translate(49.2,88.0) scale(1.0)"><path d="M2,8 L7,2 L19,2 L19,13 Q19,20 12,20 L10,20 M6.5,14.5 Q6.5,9.5 11,9.5 Q14.5,9.5 14.5,13 Q14.5,16 11,16" fill="none" stroke="#1a3060" stroke-width="4" stroke-linejoin="round"/><path d="M2,8 L7,2 L19,2 L19,13 Q19,20 12,20 L10,20 M6.5,14.5 Q6.5,9.5 11,9.5 Q14.5,9.5 14.5,13 Q14.5,16 11,16" fill="none" stroke="#5a90d0" stroke-width="2.4" stroke-linejoin="round"/></g><rect x="90.3" y="87.5" width="3" height="21" rx="1" fill="#5a90d0" stroke="#1a3a6e" stroke-width="0.8"/><path d="M80.5,98.5 L85.5,93.5 v3 h3 v4 h-3 v3z M103,98.5 L98,93.5 v3 h-3 v4 h3 v3z" fill="#5a90d0" stroke="#333" stroke-width="0.8"/><rect x="112.5" y="97" width="22.5" height="3.5" fill="#ccc" stroke="#777" stroke-width="0.6"/><path d="M116,98.7 L120,94.5 L124,98.7 L120,103z M123.5,98.7 L127.5,94.5 L131.5,98.7 L127.5,103z" fill="#5a90d0" stroke="#333" stroke-width="0.8"/><rect x="144" y="97" width="23.3" height="3.5" fill="#ccc" stroke="#777" stroke-width="0.6"/><rect x="152" y="88.5" width="3" height="20.5" rx="1.2" fill="#5a90d0" stroke="#1a3a6e" stroke-width="0.8"/><rect x="157" y="88.5" width="3" height="20.5" rx="1.2" fill="#5a90d0" stroke="#1a3a6e" stroke-width="0.8"/><rect x="177.5" y="88.5" width="21.5" height="20.5" fill="none" stroke="#5a90d0" stroke-width="2" stroke-dasharray="3,1.8"/><rect x="178" y="99" width="9" height="9.5" fill="#fff" stroke="#1a3a6e" stroke-width="1.8"/><path d="M188,98 L195,91 M190,91 h5 v5" stroke="#5a90d0" stroke-width="2" fill="none"/><rect x="209.5" y="88.5" width="11" height="20.5" fill="#fff" stroke="#5a90d0" stroke-width="2"/><rect x="209.5" y="88.5" width="11" height="20.5" fill="none" stroke="#222" stroke-width="0.6"/><path d="M222,91 L231,108.5 L222,108.5z" fill="none" stroke="#5a90d0" stroke-width="1.8" stroke-dasharray="2.5,1.2"/><path d="M242,105 Q244,100 250,102 Q256,100 262,104 Q262,109 252,108 Q244,110 242,105z" fill="none" stroke="#e01010" stroke-width="2.4"/><path d="M241,94 Q244,86 252,89 Q258,86 262,92 Q262,98 252,97 Q243,99 241,94z" fill="none" stroke="#5a90d0" stroke-width="2" stroke-dasharray="3,1"/><path d="M249,104 v-6 h-3 l4,-5 4,5 h-3 v6z M256,92 v6 h-3 l4,5 4,-5 h-3 v-6z" fill="#5a90d0" stroke="#333" stroke-width="0.7"/><path d="M277.0,91.8 h2 M277.5,91.3 v2" stroke="#c4c4c4" stroke-width="0.9" fill="none"/><path d="M281.0,91.8 h2 M281.5,91.3 v2" stroke="#c4c4c4" stroke-width="0.9" fill="none"/><path d="M277.0,95.8 h2 M277.5,95.3 v2" stroke="#c4c4c4" stroke-width="0.9" fill="none"/><path d="M281.0,95.8 h2 M281.5,95.3 v2" stroke="#c4c4c4" stroke-width="0.9" fill="none"/><path d="M277.0,99.8 h2 M277.5,99.3 v2" stroke="#c4c4c4" stroke-width="0.9" fill="none"/><path d="M281.0,99.8 h2 M281.5,99.3 v2" stroke="#c4c4c4" stroke-width="0.9" fill="none"/><path d="M277.0,103.8 h2 M277.5,103.3 v2" stroke="#c4c4c4" stroke-width="0.9" fill="none"/><path d="M281.0,103.8 h2 M281.5,103.3 v2" stroke="#c4c4c4" stroke-width="0.9" fill="none"/><path d="M299,87.6 L309,98 L304,98 L304,110 L294,110 L294,98 L289.3,98z" fill="#5a90d0" stroke="#333" stroke-width="0.8"/><rect x="295" y="98" width="8" height="11.5" fill="#3a6aa8"/><path d="M331,110.2 L341,99.5 L336,99.5 L336,87.6 L326,87.6 L326,99.5 L321.3,99.5z" fill="#5a90d0" stroke="#333" stroke-width="0.8"/><path d="M327,97 h8 v3 h5 l-9,9.5 -9,-9.5 h5z" fill="#3a6aa8"/><path d="M360.5,88.4 h4.5 v8 h8.8 v5 h-8.8 v8.6 h-4.5 v-8.6 h-8.6 v-5 h8.6z" fill="#c8c8c8" stroke="#777" stroke-width="0.9"/><path d="M363,97 v13" stroke="#999" stroke-width="2.5"/><rect x="384.5" y="96" width="21.3" height="6" fill="#5a90d0" stroke="#333" stroke-width="0.9"/><path d="M391,104.5 h8" stroke="#bbb" stroke-width="1"/><path d="M420.7,91.8 h2 M421.2,91.3 v2" stroke="#c4c4c4" stroke-width="0.9" fill="none"/><path d="M424.7,91.8 h2 M425.2,91.3 v2" stroke="#c4c4c4" stroke-width="0.9" fill="none"/><path d="M420.7,95.8 h2 M421.2,95.3 v2" stroke="#c4c4c4" stroke-width="0.9" fill="none"/><path d="M424.7,95.8 h2 M425.2,95.3 v2" stroke="#c4c4c4" stroke-width="0.9" fill="none"/><path d="M420.7,99.8 h2 M421.2,99.3 v2" stroke="#c4c4c4" stroke-width="0.9" fill="none"/><path d="M424.7,99.8 h2 M425.2,99.3 v2" stroke="#c4c4c4" stroke-width="0.9" fill="none"/><path d="M420.7,103.8 h2 M421.2,103.3 v2" stroke="#c4c4c4" stroke-width="0.9" fill="none"/><path d="M424.7,103.8 h2 M425.2,103.3 v2" stroke="#c4c4c4" stroke-width="0.9" fill="none"/><rect x="431.8" y="88.8" width="6.0" height="9.5" rx="1.2" fill="#5a90d0" stroke="#333" stroke-width="0.9"/><path d="M434.2,96.8 v-3 M435.4,96.8 v-5" stroke="#1a3a6e" stroke-width="0.8"/><rect x="431.8" y="99.8" width="6.0" height="9.5" rx="1.2" fill="#5a90d0" stroke="#333" stroke-width="0.9"/><path d="M434.2,107.8 v-3 M435.4,107.8 v-5" stroke="#1a3a6e" stroke-width="0.8"/><rect x="439.1" y="88.8" width="6.0" height="9.5" rx="1.2" fill="#5a90d0" stroke="#333" stroke-width="0.9"/><path d="M441.5,96.8 v-3 M442.7,96.8 v-5" stroke="#1a3a6e" stroke-width="0.8"/><rect x="439.1" y="99.8" width="6.0" height="9.5" rx="1.2" fill="#5a90d0" stroke="#333" stroke-width="0.9"/><path d="M441.5,107.8 v-3 M442.7,107.8 v-5" stroke="#1a3a6e" stroke-width="0.8"/><rect x="446.4" y="88.8" width="6.0" height="9.5" rx="1.2" fill="#5a90d0" stroke="#333" stroke-width="0.9"/><path d="M448.8,96.8 v-3 M450.0,96.8 v-5" stroke="#1a3a6e" stroke-width="0.8"/><rect x="446.4" y="99.8" width="6.0" height="9.5" rx="1.2" fill="#5a90d0" stroke="#333" stroke-width="0.9"/><path d="M448.8,107.8 v-3 M450.0,107.8 v-5" stroke="#1a3a6e" stroke-width="0.8"/><path d="M467,104 Q472,102 474,98 M478,96 Q480,92 482,91" stroke="#777" stroke-width="2.5" fill="none"/><path d="M467,104 Q472,102 474,98 M478,96 Q480,92 482,91" stroke="#fff" stroke-width="1" fill="none"/><rect x="463.0" y="101.5" width="5.0" height="8.0" rx="1.2" fill="#5a90d0" stroke="#333" stroke-width="0.9"/><path d="M465.0,108.0 v-3 M466.0,108.0 v-5" stroke="#1a3a6e" stroke-width="0.8"/><rect x="470.0" y="96.0" width="9.0" height="5.0" rx="1.2" fill="#5a90d0" stroke="#333" stroke-width="0.9"/><path d="M473.6,99.5 v-3 M475.4,99.5 v-5" stroke="#1a3a6e" stroke-width="0.8"/><rect x="480.5" y="88.5" width="5.0" height="9.0" rx="1.2" fill="#5a90d0" stroke="#333" stroke-width="0.9"/><path d="M482.5,96.0 v-3 M483.5,96.0 v-5" stroke="#1a3a6e" stroke-width="0.8"/><path d="M498,94 L501,105 L513,107 M501,105 L510,96 M501,105 L509,100" stroke="#777" stroke-width="0.8" stroke-dasharray="1.5,1" fill="none"/><rect x="494.5" y="88.6" width="5.5" height="5.5" rx="1.2" fill="#5a90d0" stroke="#333" stroke-width="0.9"/><path d="M496.7,92.6 v-3 M497.8,92.6 v-5" stroke="#1a3a6e" stroke-width="0.8"/><rect x="501.5" y="92.0" width="5.5" height="5.5" rx="1.2" fill="#5a90d0" stroke="#333" stroke-width="0.9"/><path d="M503.7,96.0 v-3 M504.8,96.0 v-5" stroke="#1a3a6e" stroke-width="0.8"/><rect x="508.0" y="97.5" width="5.5" height="5.5" rx="1.2" fill="#5a90d0" stroke="#333" stroke-width="0.9"/><path d="M510.2,101.5 v-3 M511.3,101.5 v-5" stroke="#1a3a6e" stroke-width="0.8"/><rect x="510.5" y="103.5" width="5.5" height="5.5" rx="1.2" fill="#5a90d0" stroke="#333" stroke-width="0.9"/><path d="M512.7,107.5 v-3 M513.8,107.5 v-5" stroke="#1a3a6e" stroke-width="0.8"/><rect x="527.5" y="88.5" width="6.0" height="9.5" rx="1.2" fill="#5a90d0" stroke="#333" stroke-width="0.9"/><path d="M529.9,96.5 v-3 M531.1,96.5 v-5" stroke="#1a3a6e" stroke-width="0.8"/><rect x="542.0" y="88.5" width="6.0" height="9.5" rx="1.2" fill="#5a90d0" stroke="#333" stroke-width="0.9"/><path d="M544.4,96.5 v-3 M545.6,96.5 v-5" stroke="#1a3a6e" stroke-width="0.8"/><rect x="535.0" y="99.5" width="6.0" height="10.0" rx="1.2" fill="#5a90d0" stroke="#333" stroke-width="0.9"/><path d="M537.4,108.0 v-3 M538.6,108.0 v-5" stroke="#1a3a6e" stroke-width="0.8"/><path d="M559,90 L577,89 L577,109 L559,109z" fill="#888" stroke="#555" stroke-width="0.8"/><path d="M577,93 h3 v10 h-3" fill="none" stroke="#888" stroke-width="2"/><rect x="561" y="93" width="12" height="9" fill="#aaa"/><path d="M563,96 h6" stroke="#fff" stroke-width="1"/><rect x="600.5" y="86.6" width="3" height="23.7" fill="#5a90d0" stroke="#666" stroke-width="0.5"/><path d="M590.5,107 L598.5,92 L598.5,107z M613,107 L605.5,92 L605.5,107z" fill="#5a90d0" stroke="#333" stroke-width="0.8"/><path d="M623,99 L627,96 L643.5,96 L643.5,105 L639,109.4 L623,109.4z" fill="#5a90d0" stroke="#333" stroke-width="0.8"/><path d="M623,99 h16 l4.5,-3 M639,99 v10.4" stroke="#333" stroke-width="0.7" fill="none"/><rect x="625" y="103" width="12" height="2" fill="#3a6aa8"/><path d="M633.5,87.5 L640,94 L636,94 L636,100 L631,100 L631,94 L627,94z" fill="#5a90d0" stroke="#333" stroke-width="0.7"/><circle cx="661" cy="102.5" r="7.5" fill="#5a90d0" stroke="#333" stroke-width="0.8"/><circle cx="669.5" cy="95" r="7.5" fill="#fff" stroke="#333" stroke-width="0.8"/><circle cx="693.5" cy="102" r="7.5" fill="#5a90d0" stroke="#333" stroke-width="0.8"/><circle cx="702" cy="95" r="7.5" fill="#5a90d0" stroke="#333" stroke-width="0.8"/><path d="M695,96 Q700,100 697,107" stroke="#3a6aa8" fill="none"/><circle cx="726" cy="102" r="7.3" fill="none" stroke="#333" stroke-width="0.8"/><circle cx="733.5" cy="95" r="7.3" fill="none" stroke="#333" stroke-width="0.8"/><path d="M727,94.8 Q733,95 733,102 Q727,102 727,94.8z" fill="#5a90d0"/><path d="M755.0,92.0 h2 M755.5,91.5 v2" stroke="#c4c4c4" stroke-width="0.9" fill="none"/><path d="M759.0,92.0 h2 M759.5,91.5 v2" stroke="#c4c4c4" stroke-width="0.9" fill="none"/><path d="M755.0,96.0 h2 M755.5,95.5 v2" stroke="#c4c4c4" stroke-width="0.9" fill="none"/><path d="M759.0,96.0 h2 M759.5,95.5 v2" stroke="#c4c4c4" stroke-width="0.9" fill="none"/><path d="M755.0,100.0 h2 M755.5,99.5 v2" stroke="#c4c4c4" stroke-width="0.9" fill="none"/><path d="M759.0,100.0 h2 M759.5,99.5 v2" stroke="#c4c4c4" stroke-width="0.9" fill="none"/><path d="M755.0,104.0 h2 M755.5,103.5 v2" stroke="#c4c4c4" stroke-width="0.9" fill="none"/><path d="M759.0,104.0 h2 M759.5,103.5 v2" stroke="#c4c4c4" stroke-width="0.9" fill="none"/><path d="M769,89 Q766,93 769,96 Q771,98 774,97 L784.5,108.5 Q786,110 787.5,108.5 Q789,107 787.5,105.5 L777,94.5 Q778,91 776,89 Q773,87 770,88.5 L773,91.5 L771.5,93 z" fill="#8a8a8a" stroke="#3a3a3a" stroke-width="0.9"/><path d="M788.5,87.5 L786,87 L782,91 L780,95 L777.5,97.5 L779.5,99.5 L782,97 L786,95 L789.5,91z" fill="#8a8a8a" stroke="#3a3a3a" stroke-width="0.8"/><path d="M778,97.5 L767.5,108 Q766,110 768,110.5 Q769.5,111 771,109.5 L781,99.5z" fill="#5a90d0" stroke="#1a3060" stroke-width="0.9"/><rect x="799.5" y="89.5" width="18.5" height="17.5" fill="#fff" stroke="#777" stroke-width="0.9"/><path d="M799.5,93.5 h18.5 M799.5,97.5 h18.5 M799.5,101.5 h18.5 M804,89.5 v17.5 M808.5,89.5 v17.5 M813,89.5 v17.5" stroke="#bbb" stroke-width="0.7"/><path d="M802,96 v8 h10 M810,102 l2,2 -2,2" stroke="#444" stroke-width="0.8" fill="none"/><path d="M829.5,99 L837.5,89 L847,88 L853,96 L853,106 L844,110.5 L829.5,107z" fill="#fff" stroke="#444" stroke-width="0.9"/><path d="M829.5,99 L837.5,89 L844,99 L853,96 M844,99 L844,110.5" fill="none" stroke="#444" stroke-width="0.9"/><path d="M844,99 L853,96 L853,106 L844,110.5z" fill="#d8d8d8"/><path d="M845,101 L852,98.5" stroke="#aaa" stroke-width="0.8"/><path d="M833,108 v-7 h5 v8" fill="#777" stroke="#444" stroke-width="0.8"/><rect x="834.5" y="102" width="2" height="6" fill="#bbb"/><path d="M865.0,87.5 h12 l4,4 v19 h-16z" fill="#fff" stroke="#555" stroke-width="0.9"/><path d="M877.0,87.5 v4 h4" fill="none" stroke="#555" stroke-width="0.7"/><path d="M868,92 h8 v15 h-8z M870,95 h3 v4 h2 v5 h-3" fill="none" stroke="#555" stroke-width="0.8"/><rect x="867" y="106" width="13" height="3" fill="#ccc"/><path d="M897.0,87.5 h12 l4,4 v19 h-16z" fill="#fff" stroke="#555" stroke-width="0.9"/><path d="M909.0,87.5 v4 h4" fill="none" stroke="#555" stroke-width="0.7"/><rect x="902" y="92" width="6" height="5.5" rx="1" fill="#e01030"/><rect x="899" y="98" width="5" height="5" fill="#2a6ab8"/><path d="M905,98 L910,97 L913,99 L912,103 L905,104z" fill="#30a0a0"/><rect x="898" y="106" width="14" height="3" fill="#ccc"/><path d="M929.0,87.5 h12 l4,4 v19 h-16z" fill="#fff" stroke="#555" stroke-width="0.9"/><path d="M941.0,87.5 v4 h4" fill="none" stroke="#555" stroke-width="0.7"/><rect x="932" y="96" width="2.5" height="10" fill="#2a6ab8"/><rect x="936" y="92" width="2.5" height="14" fill="#e01030"/><rect x="940" y="99" width="2.5" height="7" fill="#30a0a0"/><rect x="930" y="106" width="14" height="3" fill="#ccc"/><path d="M961.0,87.5 h12 l4,4 v19 h-16z" fill="#fff" stroke="#555" stroke-width="0.9"/><path d="M973.0,87.5 v4 h4" fill="none" stroke="#555" stroke-width="0.7"/><path d="M966,95 L963,98 L966,101" stroke="#2a6ab8" stroke-width="1.8" fill="none"/><path d="M972,95 L975,98 L972,101" stroke="#30a0a0" stroke-width="1.8" fill="none"/><path d="M970,93 L968,103" stroke="#e01030" stroke-width="1.6"/><rect x="962" y="104" width="14" height="5" fill="#ccc"/><path d="M993.0,87.5 h12 l4,4 v19 h-16z" fill="#fff" stroke="#555" stroke-width="0.9"/><path d="M1005.0,87.5 v4 h4" fill="none" stroke="#555" stroke-width="0.7"/><path d="M999,91 L1006,93 L1006,105 L999,103z" fill="#e01030"/><path d="M995,97 L1002,95 L1002,107 L995,109z" fill="#2a6ab8"/><path d="M1025.0,87.5 h12 l4,4 v19 h-16z" fill="#fff" stroke="#555" stroke-width="0.9"/><path d="M1037.0,87.5 v4 h4" fill="none" stroke="#555" stroke-width="0.7"/><path d="M1027,96 L1033,93 L1039,96 L1033,99z M1027,99 L1033,102 L1039,99 M1027,102 L1033,105 L1039,102" fill="none" stroke="#777" stroke-width="0.9"/><rect x="1026" y="106" width="14" height="3" fill="#ccc"/></svg><div class="t" style="left:271px;top:11.5px;font-size:13px;letter-spacing:0.2px">BIM</div><div class="t" style="left:55.3px;top:52px;font-size:13px;letter-spacing:0.2px">Top</div><div class="t" style="left:127px;top:52px;font-size:13px;letter-spacing:0.2px">2px | 10.00 mm</div><div class="t" style="left:359px;top:52px;font-size:13px;letter-spacing:0.2px">None</div>
<svg width="694" height="530" viewBox="358 119 694 530" style="position:absolute;left:358px;top:119px">
<rect x="358" y="119" width="694" height="530" fill="#fff"/>
<polygon points="595.6,519.4 763.8,588.1 763.8,600.6 595.6,531.9" fill="#6a6a6a" stroke="#000" stroke-width="1.9" stroke-linejoin="round"/>
<polygon points="763.8,588.1 1043.1,546.7 1043.1,559.2 763.8,600.6" fill="#a0a0a0" stroke="#000" stroke-width="1.9" stroke-linejoin="round"/>
<g shape-rendering="crispEdges">
<line x1="380.0" y1="649.0" x2="358.0" y2="640.0" stroke="#d2d2d2" stroke-width="1"/>
<line x1="456.1" y1="649.0" x2="358.0" y2="608.9" stroke="#d2d2d2" stroke-width="1"/>
<line x1="984.6" y1="649.0" x2="1052.0" y2="639.0" stroke="#c9c9c9" stroke-width="1"/>
<line x1="532.2" y1="649.0" x2="358.0" y2="577.8" stroke="#d2d2d2" stroke-width="1"/>
<line x1="858.3" y1="649.0" x2="1052.0" y2="620.3" stroke="#c9c9c9" stroke-width="1"/>
<line x1="608.4" y1="649.0" x2="358.0" y2="546.7" stroke="#d2d2d2" stroke-width="1"/>
<line x1="732.0" y1="649.0" x2="1052.0" y2="601.6" stroke="#c9c9c9" stroke-width="1"/>
<line x1="684.5" y1="649.0" x2="358.0" y2="515.6" stroke="#d2d2d2" stroke-width="1"/>
<line x1="605.6" y1="649.0" x2="1052.0" y2="582.8" stroke="#c9c9c9" stroke-width="1"/>
<line x1="760.6" y1="649.0" x2="358.0" y2="484.5" stroke="#d2d2d2" stroke-width="1"/>
<line x1="479.3" y1="649.0" x2="1052.0" y2="564.1" stroke="#c9c9c9" stroke-width="1"/>
<line x1="836.8" y1="649.0" x2="358.0" y2="453.4" stroke="#d2d2d2" stroke-width="1"/>
<line x1="358.0" y1="629.5" x2="1052.0" y2="526.7" stroke="#c9c9c9" stroke-width="1"/>
<line x1="989.0" y1="649.0" x2="358.0" y2="391.3" stroke="#d2d2d2" stroke-width="1"/>
<line x1="358.0" y1="610.8" x2="1052.0" y2="507.9" stroke="#c9c9c9" stroke-width="1"/>
<line x1="1052.0" y1="643.6" x2="358.0" y2="360.2" stroke="#d2d2d2" stroke-width="1"/>
<line x1="358.0" y1="592.1" x2="1052.0" y2="489.2" stroke="#c9c9c9" stroke-width="1"/>
<line x1="1052.0" y1="612.5" x2="358.0" y2="329.1" stroke="#d2d2d2" stroke-width="1"/>
<line x1="358.0" y1="573.3" x2="1052.0" y2="470.5" stroke="#c9c9c9" stroke-width="1"/>
<line x1="1052.0" y1="581.4" x2="358.0" y2="298.0" stroke="#d2d2d2" stroke-width="1"/>
<line x1="358.0" y1="554.6" x2="1052.0" y2="451.7" stroke="#c9c9c9" stroke-width="1"/>
<line x1="1052.0" y1="550.3" x2="358.0" y2="266.9" stroke="#d2d2d2" stroke-width="1"/>
<line x1="358.0" y1="535.9" x2="1052.0" y2="433.0" stroke="#c9c9c9" stroke-width="1"/>
<line x1="1052.0" y1="519.2" x2="358.0" y2="235.8" stroke="#d2d2d2" stroke-width="1"/>
<line x1="358.0" y1="517.2" x2="1052.0" y2="414.3" stroke="#c9c9c9" stroke-width="1"/>
<line x1="1052.0" y1="488.1" x2="358.0" y2="204.7" stroke="#d2d2d2" stroke-width="1"/>
<line x1="358.0" y1="498.4" x2="1052.0" y2="395.6" stroke="#c9c9c9" stroke-width="1"/>
<line x1="1052.0" y1="457.0" x2="358.0" y2="173.6" stroke="#d2d2d2" stroke-width="1"/>
<line x1="358.0" y1="479.7" x2="1052.0" y2="376.8" stroke="#c9c9c9" stroke-width="1"/>
<line x1="1052.0" y1="426.0" x2="358.0" y2="142.5" stroke="#d2d2d2" stroke-width="1"/>
<line x1="358.0" y1="461.0" x2="1052.0" y2="358.1" stroke="#c0c0c0" stroke-width="1.3"/>
<line x1="1052.0" y1="394.9" x2="376.6" y2="119.0" stroke="#c0c0c0" stroke-width="1.3"/>
<line x1="358.0" y1="442.3" x2="1052.0" y2="339.4" stroke="#c9c9c9" stroke-width="1"/>
<line x1="1052.0" y1="363.8" x2="452.7" y2="119.0" stroke="#d2d2d2" stroke-width="1"/>
<line x1="358.0" y1="423.5" x2="1052.0" y2="320.7" stroke="#c9c9c9" stroke-width="1"/>
<line x1="1052.0" y1="332.7" x2="528.9" y2="119.0" stroke="#d2d2d2" stroke-width="1"/>
<line x1="358.0" y1="404.8" x2="1052.0" y2="301.9" stroke="#c9c9c9" stroke-width="1"/>
<line x1="1052.0" y1="301.6" x2="605.0" y2="119.0" stroke="#d2d2d2" stroke-width="1"/>
<line x1="358.0" y1="386.1" x2="1052.0" y2="283.2" stroke="#c9c9c9" stroke-width="1"/>
<line x1="1052.0" y1="270.5" x2="681.1" y2="119.0" stroke="#d2d2d2" stroke-width="1"/>
<line x1="358.0" y1="367.4" x2="1052.0" y2="264.5" stroke="#c9c9c9" stroke-width="1"/>
<line x1="1052.0" y1="239.4" x2="757.3" y2="119.0" stroke="#d2d2d2" stroke-width="1"/>
<line x1="358.0" y1="348.6" x2="1052.0" y2="245.8" stroke="#c9c9c9" stroke-width="1"/>
<line x1="1052.0" y1="208.3" x2="833.4" y2="119.0" stroke="#d2d2d2" stroke-width="1"/>
<line x1="358.0" y1="329.9" x2="1052.0" y2="227.0" stroke="#c9c9c9" stroke-width="1"/>
<line x1="1052.0" y1="177.2" x2="909.5" y2="119.0" stroke="#d2d2d2" stroke-width="1"/>
<line x1="358.0" y1="311.2" x2="1052.0" y2="208.3" stroke="#c9c9c9" stroke-width="1"/>
<line x1="1052.0" y1="146.1" x2="985.7" y2="119.0" stroke="#d2d2d2" stroke-width="1"/>
<line x1="358.0" y1="292.4" x2="1052.0" y2="189.6" stroke="#c9c9c9" stroke-width="1"/>
<line x1="358.0" y1="273.7" x2="1052.0" y2="170.9" stroke="#c0c0c0" stroke-width="1.3"/>
<line x1="358.0" y1="255.0" x2="1052.0" y2="152.1" stroke="#c9c9c9" stroke-width="1"/>
<line x1="358.0" y1="236.3" x2="1052.0" y2="133.4" stroke="#c9c9c9" stroke-width="1"/>
<line x1="358.0" y1="217.5" x2="1022.8" y2="119.0" stroke="#c9c9c9" stroke-width="1"/>
<line x1="358.0" y1="198.8" x2="896.5" y2="119.0" stroke="#c9c9c9" stroke-width="1"/>
<line x1="358.0" y1="180.1" x2="770.1" y2="119.0" stroke="#c9c9c9" stroke-width="1"/>
<line x1="358.0" y1="161.4" x2="643.8" y2="119.0" stroke="#c9c9c9" stroke-width="1"/>
<line x1="358.0" y1="142.6" x2="517.5" y2="119.0" stroke="#c9c9c9" stroke-width="1"/>
<line x1="358.0" y1="123.9" x2="391.1" y2="119.0" stroke="#c9c9c9" stroke-width="1"/>
</g>
<polygon points="595.6,519.4 763.8,588.1 763.8,271.9 595.6,203.2" fill="#696969" stroke="#000" stroke-width="1.9" stroke-linejoin="round"/>
<line x1="757.7" y1="585.6" x2="757.7" y2="269.4" stroke="#000" stroke-width="1.9"/>
<line x1="601.7" y1="521.9" x2="601.7" y2="205.7" stroke="#000" stroke-width="1.9"/>
<polygon points="763.8,588.1 1043.1,546.7 1043.1,230.5 763.8,271.9" fill="#cccccc" stroke="#000" stroke-width="1.9" stroke-linejoin="round"/>
<polygon points="595.6,203.2 763.8,271.9 763.8,259.2 595.6,190.5" fill="#6a6a6a" stroke="#000" stroke-width="1.9" stroke-linejoin="round"/>
<polygon points="763.8,271.9 1043.1,230.5 1043.1,217.8 763.8,259.2" fill="#9a9a9a" stroke="#000" stroke-width="1.9" stroke-linejoin="round"/>
<polygon points="763.8,259.2 1043.1,217.8 874.9,149.1 595.6,190.5" fill="#333333" stroke="#000" stroke-width="1.9" stroke-linejoin="round"/>
<line x1="358.0" y1="648.3" x2="1052.0" y2="545.4" stroke="#e02828" stroke-width="1" shape-rendering="crispEdges"/>
<line x1="912.9" y1="649.0" x2="358.0" y2="422.4" stroke="#00cc00" stroke-width="1" shape-rendering="crispEdges"/>
<polygon points="860.2,378.0 945.8,378.0 945.8,451.4 860.2,463.9" fill="#000"/>
<polygon points="862.1,378.0 943.9,378.0 943.9,449.6 862.1,461.6" fill="#9a9a9a"/>
<polygon points="864.0,378.0 942.4,378.0 942.4,448.1 864.0,459.6" fill="#000"/>
<polygon points="865.6,378.0 938.4,378.0 938.4,446.5 865.6,457.2" fill="#9a9a9a"/>
<polygon points="866.0,378.0 938.2,378.0 938.2,446.0 866.0,456.5" fill="#000"/>
<polygon points="868.9,378.0 937.6,378.0 937.6,444.5 868.9,454.5" fill="#2f5f5f"/>
<polygon points="870.8,378.0 937.6,378.0 937.6,443.9 870.8,453.6" fill="#689a98"/>
<polygon points="848.1,367.9 914.8,396.0 1024.2,379.2 1024.2,388.5 915.0,404.6 848.1,377.9" fill="#6699cc"/>
<polygon points="850.5,372.1 913.7,399.3 913.7,401.5 850.5,376.7" fill="#99ccff"/>
<polygon points="915.8,397.2 1021.0,381.8 1021.0,385.8 915.8,401.3" fill="#c8ffff"/>
<polygon points="848.1,367.9 957.7,352.1 1024.2,379.2 914.8,396.0" fill="#6699cc"/>
<line x1="860.4" y1="366.6" x2="946.0" y2="354.0" stroke="#000" stroke-width="1.5"/>
</svg>
<div class="a" style="left:1.4px;top:119.3px;width:45.2px;height:27.7px;background:#fff;border:1px solid #b4b4b4;border-bottom:none;border-radius:3px 3px 0 0"></div>
<div class="a" style="left:46.6px;top:122.1px;width:43.2px;height:24.5px;background:#c8c8c8;border:1px solid #a8a8a8;border-radius:3px 3px 0 0"></div>
<div class="t" style="left:6.5px;top:126.0px;font-size:13px;letter-spacing:0.2px;">Model</div>
<div class="t" style="left:52.1px;top:127.0px;font-size:13px;letter-spacing:0.2px;color:#8a8a8a">Tasks</div>
<div class="t" style="left:132.5px;top:148.0px;font-size:13px;letter-spacing:0.2px;">Model</div>
<svg class="a" style="left:290px;top:145px" width="66" height="22" viewBox="290 145 66 22"><rect x="296.5" y="150.5" width="10" height="10" fill="none" stroke="#666" stroke-width="1.3"/><line x1="296.5" y1="153.5" x2="306.5" y2="153.5" stroke="#666" stroke-width="1.3"/><rect x="316.5" y="153.5" width="7" height="7" fill="none" stroke="#666" stroke-width="1.3"/><path d="M319.5,153.5 v-3 h7 v7 h-3" fill="none" stroke="#666" stroke-width="1.3"/><path d="M339,151 l9,9 M348,151 l-9,9" stroke="#555" stroke-width="1.6"/></svg>
<div class="a" style="left:338.0px;top:164.0px;width:14.0px;height:1.0px;background:#c4c4c4"></div>
<div class="a" style="left:338.0px;top:168.0px;width:14.0px;height:232.0px;border:1px solid #a0a0a0;background:#fff"></div>
<div class="a" style="left:338.0px;top:177.0px;width:14.0px;height:1.0px;background:#c8c8c8"></div>
<div class="a" style="left:338.0px;top:193.0px;width:14.0px;height:1.5px;background:#909090"></div>
<div class="a" style="left:338.0px;top:385.0px;width:14.0px;height:1.5px;background:#909090"></div>
<svg class="a" style="left:338px;top:168px" width="14" height="232"><path d="M5.5,7 h3 l-1.5,-2z M5.5,224 h3 l-1.5,2z" fill="#555"/></svg>
<div class="a" style="left:1.4px;top:380.0px;width:156.0px;height:18.0px;background:#3399ff"></div>
<svg class="a" style="left:0;top:0" width="200" height="410"><polygon points="26.0,171.0 35.0,171.0 30.5,176.0" fill="#000"/></svg>
<svg class="a" style="left:45.0px;top:168.3px" width="14" height="10" viewBox="0 0 14 10"><path d="M1.2,5 L4,2 Q7,0.8 10,2 L12.8,5 L10,8 Q7,9.2 4,8 Z" fill="none" stroke="#000" stroke-width="1.15"/><path d="M5,6.5 h4 v-2 a2,2 0 0 0 -3,-1 v1 h-1z" fill="#000"/></svg>
<svg class="a" style="left:65.0px;top:164.5px" width="18" height="18" viewBox="0 0 18 18"><path d="M2,13 L8,5 Q9,3.5 11,3.5 L15,3.8 L17,6 L17,11 L11,17 L3,15.5z" fill="#fafafa" stroke="#888" stroke-width="0.9"/><path d="M2,13 L10,16 L17,8 M10,16 L11,17 M8,5 L14,6.5 L17,6 M14,6.5 L10,13 L2,13" fill="none" stroke="#999" stroke-width="0.8"/><path d="M10,16 L17,8 L17,11 L11,17z" fill="#bbb"/><rect x="7" y="8" width="5" height="2" fill="#ccc"/></svg>
<div class="t" style="left:88.0px;top:166.3px;font-size:13px;letter-spacing:0.2px;color:#000">Site</div>
<svg class="a" style="left:0;top:0" width="200" height="410"><polygon points="46.0,189.0 55.0,189.0 50.5,194.0" fill="#000"/></svg>
<svg class="a" style="left:65.0px;top:186.3px" width="14" height="10" viewBox="0 0 14 10"><path d="M1.2,5 L4,2 Q7,0.8 10,2 L12.8,5 L10,8 Q7,9.2 4,8 Z" fill="none" stroke="#000" stroke-width="1.15"/><path d="M5,6.5 h4 v-2 a2,2 0 0 0 -3,-1 v1 h-1z" fill="#000"/></svg>
<svg class="a" style="left:85.0px;top:182.5px" width="18" height="18" viewBox="0 0 18 18"><path d="M1.5,9 L6,3 L13,2.5 L17,7.5 L17,14 L10,17.5 L1.5,15z" fill="#fafafa" stroke="#777" stroke-width="0.9"/><path d="M1.5,9 L10,11 L17,7.5 M6,3 L10,11 L10,17.5" fill="none" stroke="#888" stroke-width="0.8"/><path d="M10,11 L17,7.5 L17,14 L10,17.5z" fill="#c8c8c8"/><path d="M3.5,16 v-5 q1.5,-2 3,0 v5.5" fill="#fff" stroke="#777" stroke-width="0.9"/><rect x="4.3" y="11.5" width="1.6" height="4.5" fill="#999"/></svg>
<div class="t" style="left:108.0px;top:184.3px;font-size:13px;letter-spacing:0.2px;color:#000">Building</div>
<svg class="a" style="left:0;top:0" width="200" height="410"><polygon points="66.0,207.0 75.0,207.0 70.5,212.0" fill="#000"/></svg>
<svg class="a" style="left:85.0px;top:204.3px" width="14" height="10" viewBox="0 0 14 10"><path d="M1.2,5 L4,2 Q7,0.8 10,2 L12.8,5 L10,8 Q7,9.2 4,8 Z" fill="none" stroke="#000" stroke-width="1.15"/><path d="M5,6.5 h4 v-2 a2,2 0 0 0 -3,-1 v1 h-1z" fill="#000"/></svg>
<svg class="a" style="left:105.0px;top:200.5px" width="18" height="18" viewBox="0 0 18 18"><rect x="1.5" y="2.5" width="14" height="11" fill="#f6f6f6" stroke="#777" stroke-width="1"/><path d="M3,15 h13.5 v-11" fill="none" stroke="#aaa" stroke-width="1.3"/><path d="M3.5,5.5 h3 v5.5 h-3z M8.5,5 h5 v3 h-2 v2.5 h2" fill="none" stroke="#333" stroke-width="1.1"/></svg>
<div class="t" style="left:128.0px;top:202.3px;font-size:13px;letter-spacing:0.2px;color:#000">Level</div>
<svg class="a" style="left:0;top:0" width="200" height="410"><polygon points="88.0,223.0 88.0,232.0 93.0,227.5" fill="#000"/></svg>
<svg class="a" style="left:105.0px;top:222.3px" width="14" height="10" viewBox="0 0 14 10"><path d="M1.2,5 L4,2 Q7,0.8 10,2 L12.8,5 L10,8 Q7,9.2 4,8 Z" fill="none" stroke="#000" stroke-width="1.15"/><path d="M5,6.5 h4 v-2 a2,2 0 0 0 -3,-1 v1 h-1z" fill="#000"/></svg>
<svg class="a" style="left:125.0px;top:218.5px" width="18" height="18" viewBox="0 0 18 18"><path d="M1,4 L12,2 L17,3 L17,6 L6,8 L1,6.5z" fill="#eee" stroke="#777" stroke-width="0.8"/><path d="M1,4 L6,5.5 L17,3 M6,5.5 V8" fill="none" stroke="#777" stroke-width="0.7"/><path d="M3,7 h3 v9 l-1.5,1 -1.5,-1z" fill="#ddd" stroke="#777" stroke-width="0.8"/><path d="M10,6.5 h3.5 v8.5 l-1.5,1 -2,-1z" fill="#ddd" stroke="#777" stroke-width="0.8"/><rect x="12" y="6.5" width="1.5" height="8.5" fill="#aaa"/><rect x="5" y="7" width="1" height="9" fill="#aaa"/></svg>
<div class="t" style="left:148.0px;top:220.3px;font-size:13px;letter-spacing:0.2px;color:#000">Slab</div>
<svg class="a" style="left:0;top:0" width="200" height="410"><polygon points="86.0,243.0 95.0,243.0 90.5,248.0" fill="#000"/></svg>
<svg class="a" style="left:105.0px;top:240.3px" width="14" height="10" viewBox="0 0 14 10"><path d="M1.2,5 L4,2 Q7,0.8 10,2 L12.8,5 L10,8 Q7,9.2 4,8 Z" fill="none" stroke="#000" stroke-width="1.15"/><path d="M5,6.5 h4 v-2 a2,2 0 0 0 -3,-1 v1 h-1z" fill="#000"/></svg>
<svg class="a" style="left:125.0px;top:236.5px" width="18" height="18" viewBox="0 0 18 18"><path d="M1,4 L6,1.5 L17,5 L17,14 L12,17 L1,13z" fill="#f2f2f2" stroke="#777" stroke-width="0.9"/><path d="M12,8 L17,5 L17,14 L12,17z" fill="#ccc"/><path d="M1,4 L12,8 L17,5 M12,8 V17 M1,7 L12,11 L17,8.5 M1,10 L12,14 L17,11.5 M5,5.5 v3 M9,9.5 v3 M4,11 v3 M8,12.5 v3" fill="none" stroke="#888" stroke-width="0.8"/></svg>
<div class="t" style="left:148.0px;top:238.3px;font-size:13px;letter-spacing:0.2px;color:#000">Wall</div>
<svg class="a" style="left:125.0px;top:258.3px" width="14" height="10" viewBox="0 0 14 10"><path d="M1.2,5 L4,2 Q7,0.8 10,2 L12.8,5 L10,8 Q7,9.2 4,8 Z" fill="none" stroke="#a0a0a0" stroke-width="1.15"/><path d="M5,6.5 h4 v-2 a2,2 0 0 0 -3,-1 v1 h-1z" fill="#a0a0a0"/><line x1="2.5" y1="0.5" x2="11.5" y2="9.5" stroke="#a0a0a0" stroke-width="1.1"/></svg>
<svg class="a" style="left:145.0px;top:254.5px" width="18" height="18" viewBox="0 0 18 18"><path d="M1,12 L5.5,12 L9,5 L11,14 L16,2" fill="none" stroke="#999" stroke-width="1.7"/></svg>
<div class="t" style="left:168.0px;top:256.3px;font-size:13px;letter-spacing:0.2px;color:#8a8a8a">Line</div>
<svg class="a" style="left:0;top:0" width="200" height="410"><polygon points="108.0,277.0 108.0,286.0 113.0,281.5" fill="#000"/></svg>
<svg class="a" style="left:125.0px;top:276.3px" width="14" height="10" viewBox="0 0 14 10"><path d="M1.2,5 L4,2 Q7,0.8 10,2 L12.8,5 L10,8 Q7,9.2 4,8 Z" fill="none" stroke="#000" stroke-width="1.15"/><path d="M5,6.5 h4 v-2 a2,2 0 0 0 -3,-1 v1 h-1z" fill="#000"/></svg>
<svg class="a" style="left:145.0px;top:272.5px" width="18" height="18" viewBox="0 0 18 18"><path d="M1,3 L6,1 L17,3.5 L17,16 L12,17.5 L1,15z" fill="#ddd" stroke="#555" stroke-width="0.9"/><path d="M12,6 L17,3.5 L17,16 L12,17.5z" fill="#aaa"/><path d="M2.5,5 h8 v10.5 h-8z" fill="#bbb" stroke="#666" stroke-width="0.8"/><path d="M6.5,5 v10.5 M2.5,10 h8" stroke="#666" stroke-width="0.8"/><rect x="3.3" y="6" width="2.5" height="3" fill="#eee"/><rect x="7.3" y="11" width="2.5" height="3" fill="#eee"/></svg>
<div class="t" style="left:168.0px;top:274.3px;font-size:13px;letter-spacing:0.2px;color:#000">Window</div>
<svg class="a" style="left:0;top:0" width="200" height="410"><polygon points="88.0,295.0 88.0,304.0 93.0,299.5" fill="#000"/></svg>
<svg class="a" style="left:105.0px;top:294.3px" width="14" height="10" viewBox="0 0 14 10"><path d="M1.2,5 L4,2 Q7,0.8 10,2 L12.8,5 L10,8 Q7,9.2 4,8 Z" fill="none" stroke="#000" stroke-width="1.15"/><path d="M5,6.5 h4 v-2 a2,2 0 0 0 -3,-1 v1 h-1z" fill="#000"/></svg>
<svg class="a" style="left:125.0px;top:290.5px" width="18" height="18" viewBox="0 0 18 18"><path d="M1,4 L6,1.5 L17,5 L17,14 L12,17 L1,13z" fill="#f2f2f2" stroke="#777" stroke-width="0.9"/><path d="M12,8 L17,5 L17,14 L12,17z" fill="#ccc"/><path d="M1,4 L12,8 L17,5 M12,8 V17 M1,7 L12,11 L17,8.5 M1,10 L12,14 L17,11.5 M5,5.5 v3 M9,9.5 v3 M4,11 v3 M8,12.5 v3" fill="none" stroke="#888" stroke-width="0.8"/></svg>
<div class="t" style="left:148.0px;top:292.3px;font-size:13px;letter-spacing:0.2px;color:#000">Wall001</div>
<svg class="a" style="left:0;top:0" width="200" height="410"><polygon points="88.0,313.0 88.0,322.0 93.0,317.5" fill="#000"/></svg>
<svg class="a" style="left:105.0px;top:312.3px" width="14" height="10" viewBox="0 0 14 10"><path d="M1.2,5 L4,2 Q7,0.8 10,2 L12.8,5 L10,8 Q7,9.2 4,8 Z" fill="none" stroke="#000" stroke-width="1.15"/><path d="M5,6.5 h4 v-2 a2,2 0 0 0 -3,-1 v1 h-1z" fill="#000"/></svg>
<svg class="a" style="left:125.0px;top:308.5px" width="18" height="18" viewBox="0 0 18 18"><path d="M1,4 L6,1.5 L17,5 L17,14 L12,17 L1,13z" fill="#f2f2f2" stroke="#777" stroke-width="0.9"/><path d="M12,8 L17,5 L17,14 L12,17z" fill="#ccc"/><path d="M1,4 L12,8 L17,5 M12,8 V17 M1,7 L12,11 L17,8.5 M1,10 L12,14 L17,11.5 M5,5.5 v3 M9,9.5 v3 M4,11 v3 M8,12.5 v3" fill="none" stroke="#888" stroke-width="0.8"/></svg>
<div class="t" style="left:148.0px;top:310.3px;font-size:13px;letter-spacing:0.2px;color:#000">Wall002</div>
<svg class="a" style="left:0;top:0" width="200" height="410"><polygon points="88.0,331.0 88.0,340.0 93.0,335.5" fill="#000"/></svg>
<svg class="a" style="left:105.0px;top:330.3px" width="14" height="10" viewBox="0 0 14 10"><path d="M1.2,5 L4,2 Q7,0.8 10,2 L12.8,5 L10,8 Q7,9.2 4,8 Z" fill="none" stroke="#000" stroke-width="1.15"/><path d="M5,6.5 h4 v-2 a2,2 0 0 0 -3,-1 v1 h-1z" fill="#000"/></svg>
<svg class="a" style="left:125.0px;top:326.5px" width="18" height="18" viewBox="0 0 18 18"><path d="M1,4 L6,1.5 L17,5 L17,14 L12,17 L1,13z" fill="#f2f2f2" stroke="#777" stroke-width="0.9"/><path d="M12,8 L17,5 L17,14 L12,17z" fill="#ccc"/><path d="M1,4 L12,8 L17,5 M12,8 V17 M1,7 L12,11 L17,8.5 M1,10 L12,14 L17,11.5 M5,5.5 v3 M9,9.5 v3 M4,11 v3 M8,12.5 v3" fill="none" stroke="#888" stroke-width="0.8"/></svg>
<div class="t" style="left:148.0px;top:328.3px;font-size:13px;letter-spacing:0.2px;color:#000">Wall003</div>
<svg class="a" style="left:0;top:0" width="200" height="410"><polygon points="88.0,349.0 88.0,358.0 93.0,353.5" fill="#000"/></svg>
<svg class="a" style="left:105.0px;top:348.3px" width="14" height="10" viewBox="0 0 14 10"><path d="M1.2,5 L4,2 Q7,0.8 10,2 L12.8,5 L10,8 Q7,9.2 4,8 Z" fill="none" stroke="#000" stroke-width="1.15"/><path d="M5,6.5 h4 v-2 a2,2 0 0 0 -3,-1 v1 h-1z" fill="#000"/></svg>
<svg class="a" style="left:125.0px;top:344.5px" width="18" height="18" viewBox="0 0 18 18"><path d="M1,4 L12,2 L17,3 L17,6 L6,8 L1,6.5z" fill="#eee" stroke="#777" stroke-width="0.8"/><path d="M1,4 L6,5.5 L17,3 M6,5.5 V8" fill="none" stroke="#777" stroke-width="0.7"/><path d="M3,7 h3 v9 l-1.5,1 -1.5,-1z" fill="#ddd" stroke="#777" stroke-width="0.8"/><path d="M10,6.5 h3.5 v8.5 l-1.5,1 -2,-1z" fill="#ddd" stroke="#777" stroke-width="0.8"/><rect x="12" y="6.5" width="1.5" height="8.5" fill="#aaa"/><rect x="5" y="7" width="1" height="9" fill="#aaa"/></svg>
<div class="t" style="left:148.0px;top:346.3px;font-size:13px;letter-spacing:0.2px;color:#000">Slab001</div>
<svg class="a" style="left:0;top:0" width="200" height="410"><polygon points="88.0,367.0 88.0,376.0 93.0,371.5" fill="#000"/></svg>
<svg class="a" style="left:105.0px;top:366.3px" width="14" height="10" viewBox="0 0 14 10"><path d="M1.2,5 L4,2 Q7,0.8 10,2 L12.8,5 L10,8 Q7,9.2 4,8 Z" fill="none" stroke="#000" stroke-width="1.15"/><path d="M5,6.5 h4 v-2 a2,2 0 0 0 -3,-1 v1 h-1z" fill="#000"/></svg>
<svg class="a" style="left:125.0px;top:362.5px" width="18" height="18" viewBox="0 0 18 18"><circle cx="9" cy="9.5" r="6.5" fill="none" stroke="#999" stroke-width="2.2" stroke-dasharray="1.6,1.4"/><circle cx="9.5" cy="9" r="3.5" fill="#eee" stroke="#888" stroke-width="1"/><path d="M3,12 q2,4 5,4" stroke="#888" stroke-width="1.6" fill="none"/></svg>
<div class="t" style="left:148.0px;top:364.3px;font-size:13px;letter-spacing:0.2px;color:#000">Space</div>
<svg class="a" style="left:0;top:0" width="200" height="410"><polygon points="28.0,385.0 28.0,394.0 33.0,389.5" fill="#000"/></svg>
<svg class="a" style="left:45.0px;top:384.3px" width="14" height="10" viewBox="0 0 14 10"><path d="M1.2,5 L4,2 Q7,0.8 10,2 L12.8,5 L10,8 Q7,9.2 4,8 Z" fill="none" stroke="#000" stroke-width="1.15"/><path d="M5,6.5 h4 v-2 a2,2 0 0 0 -3,-1 v1 h-1z" fill="#000"/></svg>
<svg class="a" style="left:65.0px;top:380.5px" width="18" height="18" viewBox="0 0 18 18"><path d="M1,4 L10,2.5 L12,3.5 L12,6.5 L3,8 L1,7z" fill="#ddd" stroke="#666" stroke-width="0.8"/><path d="M3,7.5 h3 v9 l-1.5,1 -1.5,-1z" fill="#aaa" stroke="#666" stroke-width="0.8"/><path d="M9,6.5 h3.5 v9 l-1.5,1 -2,-1z" fill="#aaa" stroke="#666" stroke-width="0.8"/><path d="M7.5,6.5 L11,10.5 L17,1.5" fill="none" stroke="#1a5aa8" stroke-width="2.2"/></svg>
<div class="t" style="left:88.0px;top:382.3px;font-size:13px;letter-spacing:0.2px;color:#000">Slab002</div>
<div class="a" style="left:0.0px;top:409.0px;width:352.0px;height:1.5px;background:#b8b8b8"></div>
<div class="a" style="left:0;top:410.5px;width:337px;height:244.3px;overflow:hidden">
<div class="t" style="left:25.3px;top:-9.7px;font-size:13px;letter-spacing:0.2px;">Base Perp...</div>
<div class="t" style="left:105.6px;top:-9.7px;font-size:13px;letter-spacing:0.2px;">false</div>
<div class="a" style="left:22.2px;top:6.5px;width:314.8px;height:1.0px;background:#a8a8a8"></div>
<div class="a" style="left:101.0px;top:-13.0px;width:1.0px;height:20.0px;background:#a8a8a8"></div>
<div class="t" style="left:25.3px;top:10.1px;font-size:13px;letter-spacing:0.2px;">Base Rota...</div>
<div class="t" style="left:105.6px;top:10.1px;font-size:13px;letter-spacing:0.2px;">0.00 °</div>
<div class="a" style="left:22.2px;top:26.3px;width:314.8px;height:1.0px;background:#a8a8a8"></div>
<div class="a" style="left:101.0px;top:6.8px;width:1.0px;height:20.0px;background:#a8a8a8"></div>
<div class="t" style="left:25.3px;top:30.3px;font-size:13px;letter-spacing:0.2px;">Compute...</div>
<div class="t" style="left:105.6px;top:30.3px;font-size:13px;letter-spacing:0.2px;">100.00 mm</div>
<div class="a" style="left:22.2px;top:46.5px;width:314.8px;height:1.0px;background:#a8a8a8"></div>
<div class="a" style="left:101.0px;top:27.0px;width:1.0px;height:20.0px;background:#a8a8a8"></div>
<div class="t" style="left:25.3px;top:50.5px;font-size:13px;letter-spacing:0.2px;">Tool</div>
<div class="t" style="left:105.6px;top:50.5px;font-size:13px;letter-spacing:0.2px;"></div>
<div class="a" style="left:22.2px;top:66.7px;width:314.8px;height:1.0px;background:#a8a8a8"></div>
<div class="a" style="left:101.0px;top:47.2px;width:1.0px;height:20.0px;background:#a8a8a8"></div>
<div class="t" style="left:25.3px;top:70.3px;font-size:13px;letter-spacing:0.2px;">Tool Offse...</div>
<div class="t" style="left:105.6px;top:70.3px;font-size:13px;letter-spacing:0.2px;">0.00 mm</div>
<div class="a" style="left:22.2px;top:86.5px;width:314.8px;height:1.0px;background:#a8a8a8"></div>
<div class="a" style="left:101.0px;top:67.0px;width:1.0px;height:20.0px;background:#a8a8a8"></div>
<div class="t" style="left:25.3px;top:90.1px;font-size:13px;letter-spacing:0.2px;">Tool Offse...</div>
<div class="t" style="left:105.6px;top:90.1px;font-size:13px;letter-spacing:0.2px;">0.00 mm</div>
<div class="a" style="left:22.2px;top:106.3px;width:314.8px;height:1.0px;background:#a8a8a8"></div>
<div class="a" style="left:101.0px;top:86.8px;width:1.0px;height:20.0px;background:#a8a8a8"></div>
<div class="t" style="left:6.0px;top:110.2px;font-size:13px;letter-spacing:0.2px;font-weight:bold;letter-spacing:0.6px">IFC</div>
<div class="a" style="left:1.7px;top:126.8px;width:100.1px;height:24.8px;background:#3399ff"></div>
<div class="t" style="left:25.3px;top:132.5px;font-size:13px;letter-spacing:0.2px;">Ifc Type</div>
<div class="a" style="left:102.5px;top:127.0px;width:233.5px;height:25.3px;background:#fff;border:1px solid #a0a0a0;border-top:2px solid #9a9a9a"></div>
<div class="t" style="left:105.6px;top:132.5px;font-size:13px;letter-spacing:0.2px;">Shading Device</div>
<svg class="a" style="left:317px;top:136.0px" width="12" height="8"><polygon points="1.5,1.5 10.5,1.5 6,6" fill="#000"/></svg>
<div class="t" style="left:6.0px;top:155.3px;font-size:13px;letter-spacing:0.2px;font-weight:bold;letter-spacing:0.6px">IFC Attributes</div>
<div class="a" style="left:1.7px;top:171.4px;width:335.3px;height:1.0px;background:#a8a8a8"></div>
<div class="t" style="left:25.3px;top:175.2px;font-size:13px;letter-spacing:0.2px;">Description</div>
<div class="a" style="left:22.2px;top:191.4px;width:314.8px;height:1.0px;background:#a8a8a8"></div>
<div class="a" style="left:101.0px;top:171.9px;width:1.0px;height:20.0px;background:#a8a8a8"></div>
<div class="t" style="left:25.3px;top:195.2px;font-size:13px;letter-spacing:0.2px;">Global Id</div>
<div class="a" style="left:22.2px;top:211.4px;width:314.8px;height:1.0px;background:#a8a8a8"></div>
<div class="a" style="left:101.0px;top:191.9px;width:1.0px;height:20.0px;background:#a8a8a8"></div>
<div class="t" style="left:25.3px;top:215.4px;font-size:13px;letter-spacing:0.2px;">Object Type</div>
<div class="a" style="left:22.2px;top:231.6px;width:314.8px;height:1.0px;background:#a8a8a8"></div>
<div class="a" style="left:101.0px;top:212.1px;width:1.0px;height:20.0px;background:#a8a8a8"></div>
<div class="t" style="left:25.3px;top:235.4px;font-size:13px;letter-spacing:0.2px;">Predefine...</div>
<div class="a" style="left:22.2px;top:251.6px;width:314.8px;height:1.0px;background:#a8a8a8"></div>
<div class="a" style="left:101.0px;top:232.1px;width:1.0px;height:20.0px;background:#a8a8a8"></div>
<div class="t" style="left:105.6px;top:235.4px;font-size:13px;letter-spacing:0.2px;">JALOUSIE</div>
</div>
<div class="a" style="left:336.7px;top:410.0px;width:14.6px;height:244.5px;border:1px solid #a0a0a0;border-left:2px solid #a0a0a0;background:#fff"></div>
<div class="a" style="left:336.7px;top:423.0px;width:14.6px;height:1.0px;background:#c8c8c8"></div>
<div class="a" style="left:336.7px;top:528.5px;width:14.6px;height:1.0px;background:#a0a0a0"></div>
<div class="a" style="left:336.7px;top:585.0px;width:14.6px;height:1.0px;background:#a0a0a0"></div>
<div class="a" style="left:336.7px;top:640.0px;width:14.6px;height:1.0px;background:#c8c8c8"></div>
<svg class="a" style="left:337px;top:410px" width="14" height="245"><path d="M5.5,7 h3 l-1.5,-2z M5.5,238 h3 l-1.5,2z" fill="#555"/></svg>
<div class="a" style="left:-1.7px;top:528.5px;width:340.6px;height:39.3px;border:3.6px solid #ff0000"></div>
<div class="a" style="left:2.0px;top:654.8px;width:37.0px;height:24.2px;background:#c8c8c8;border:1px solid #a8a8a8;border-top:none;border-radius:0 0 3px 3px"></div>
<div class="a" style="left:39.5px;top:654.8px;width:38.3px;height:27.2px;background:#fff;border:1px solid #b4b4b4;border-top:none;border-radius:0 0 3px 3px"></div>
<div class="t" style="left:6.5px;top:660.3px;font-size:13px;letter-spacing:0.2px;color:#8a8a8a">View</div>
<div class="t" style="left:45.5px;top:662.3px;font-size:13px;letter-spacing:0.2px;">Data</div>
<div class="t" style="left:4.0px;top:698.8px;font-size:13px;letter-spacing:0.2px;letter-spacing:0.28px">Touched (but must be executed), Internal name: Structure002</div>
<div class="a" style="left:358.3px;top:650.4px;width:95.1px;height:29.6px;background:#c8c8c8;border:1px solid #a8a8a8;border-top:none;border-radius:0 0 3px 3px"></div>
<div class="a" style="left:454.0px;top:649.0px;width:141.0px;height:33.0px;background:#fff;border:1px solid #b4b4b4;border-top:none;border-radius:0 0 3px 3px"></div>
<div class="t" style="left:389.0px;top:658.0px;font-size:13px;letter-spacing:0.2px;color:#8a8a8a">Start</div>
<div class="t" style="left:485.0px;top:658.8px;font-size:13px;letter-spacing:0.2px;">shoebox : 1*</div>
<svg class="a" style="left:358px;top:649px" width="240" height="35" viewBox="358 649 240 35"><path d="M433,660.5 l12.5,12.5 M445.5,660.5 l-12.5,12.5" stroke="#8a8a8a" stroke-width="3"/><path d="M574.5,661 l12.5,12.5 M587,661 l-12.5,12.5" stroke="#7a7a7a" stroke-width="3"/><path d="M365,657 h11 v4 h-7 v3 h5 v4 h-5 v5 h-4z" fill="#e03030"/><path d="M368.5,661 h8 l-3,3 h2 l-6,8 2,-5 h-3z" fill="#3a8ef0"/><path d="M461,656 h8 l3,3 v13 h-11z" fill="#fff" stroke="#777" stroke-width="1"/><rect x="463" y="662" width="5" height="6" fill="#2e5aa0"/><circle cx="468" cy="662" r="2.2" fill="#d02020"/></svg>
<svg class="a" style="left:760px;top:684px" width="292" height="36" viewBox="760 684 292 36"><rect x="767.5" y="690.5" width="32" height="30" rx="3" fill="#c8c8c8" stroke="#b0b0b0"/><rect x="767.5" y="690.5" width="32" height="8" fill="#fff" stroke="none"/><rect x="773" y="696" width="19" height="19" fill="#2b5d1e" stroke="#555" stroke-width="1.2"/><path d="M776,701 l3,2.5 -3,2.5 M779,710 h6" stroke="#fff" stroke-width="1.2" fill="none"/><path d="M786,697 h4 l-2,3z" fill="#c33"/><rect x="806" y="697" width="19" height="17" fill="#fff" stroke="#888" stroke-width="1"/><path d="M806,701 h19 M806,705 h19 M806,709 h19 M812,697 v17 M818,697 v17" stroke="#bbb" stroke-width="0.8"/><path d="M810,703 v8 h8" stroke="#444" fill="none" stroke-width="1"/><path d="M837,695 h20 v20 h-20z" fill="#888" stroke="#555"/><path d="M857,695 v20 h-20z" fill="#ddd"/><path d="M837,715 L857,695" stroke="#333" stroke-width="2"/><path d="M880,698 L888,706 L880,714 L872,706z" fill="none" stroke="#d4d4d4" stroke-width="3.5"/><g fill="#d4d4d4" stroke="#c4c4c4" stroke-width="0.8"><circle cx="880" cy="698.5" r="3.6"/><circle cx="880" cy="713.5" r="3.6"/><circle cx="872.5" cy="706" r="3.6"/><circle cx="887.5" cy="706" r="3.6"/></g><rect x="897.5" y="692.5" width="89" height="27" rx="3" fill="#fff" stroke="#aaa"/><path d="M926,699 l3.5,4 h-2.5 v2 h2 v-2.5 l4,3.5 -4,3.5 v-2.5 h-2 v2 h2.5 l-3.5,4 -3.5,-4 h2.5 v-2 h-2 v2.5 l-4,-3.5 4,-3.5 v2.5 h2 v-2 h-2.5z" fill="#2a6fb8" stroke="#1a3a6a" stroke-width="0.6"/><path d="M976.5,704 h8 l-4,4z" fill="#555"/><rect x="1008.5" y="692.5" width="50" height="27" rx="3" fill="#fff" stroke="#aaa"/><rect x="1011.5" y="699" width="13.5" height="14" fill="#2e6ab8"/><path d="M1011.5,703 l6.75,5 6.75,-5" stroke="#7aa0d0" fill="none"/></svg>
<div class="t" style="left:936.5px;top:698.8px;font-size:13px;letter-spacing:0.2px;">Auto</div>
<div class="a" style="left:18.5px;top:376.6px;width:143.2px;height:25.8px;border:3.6px solid #ff0000"></div>
</body></html>
